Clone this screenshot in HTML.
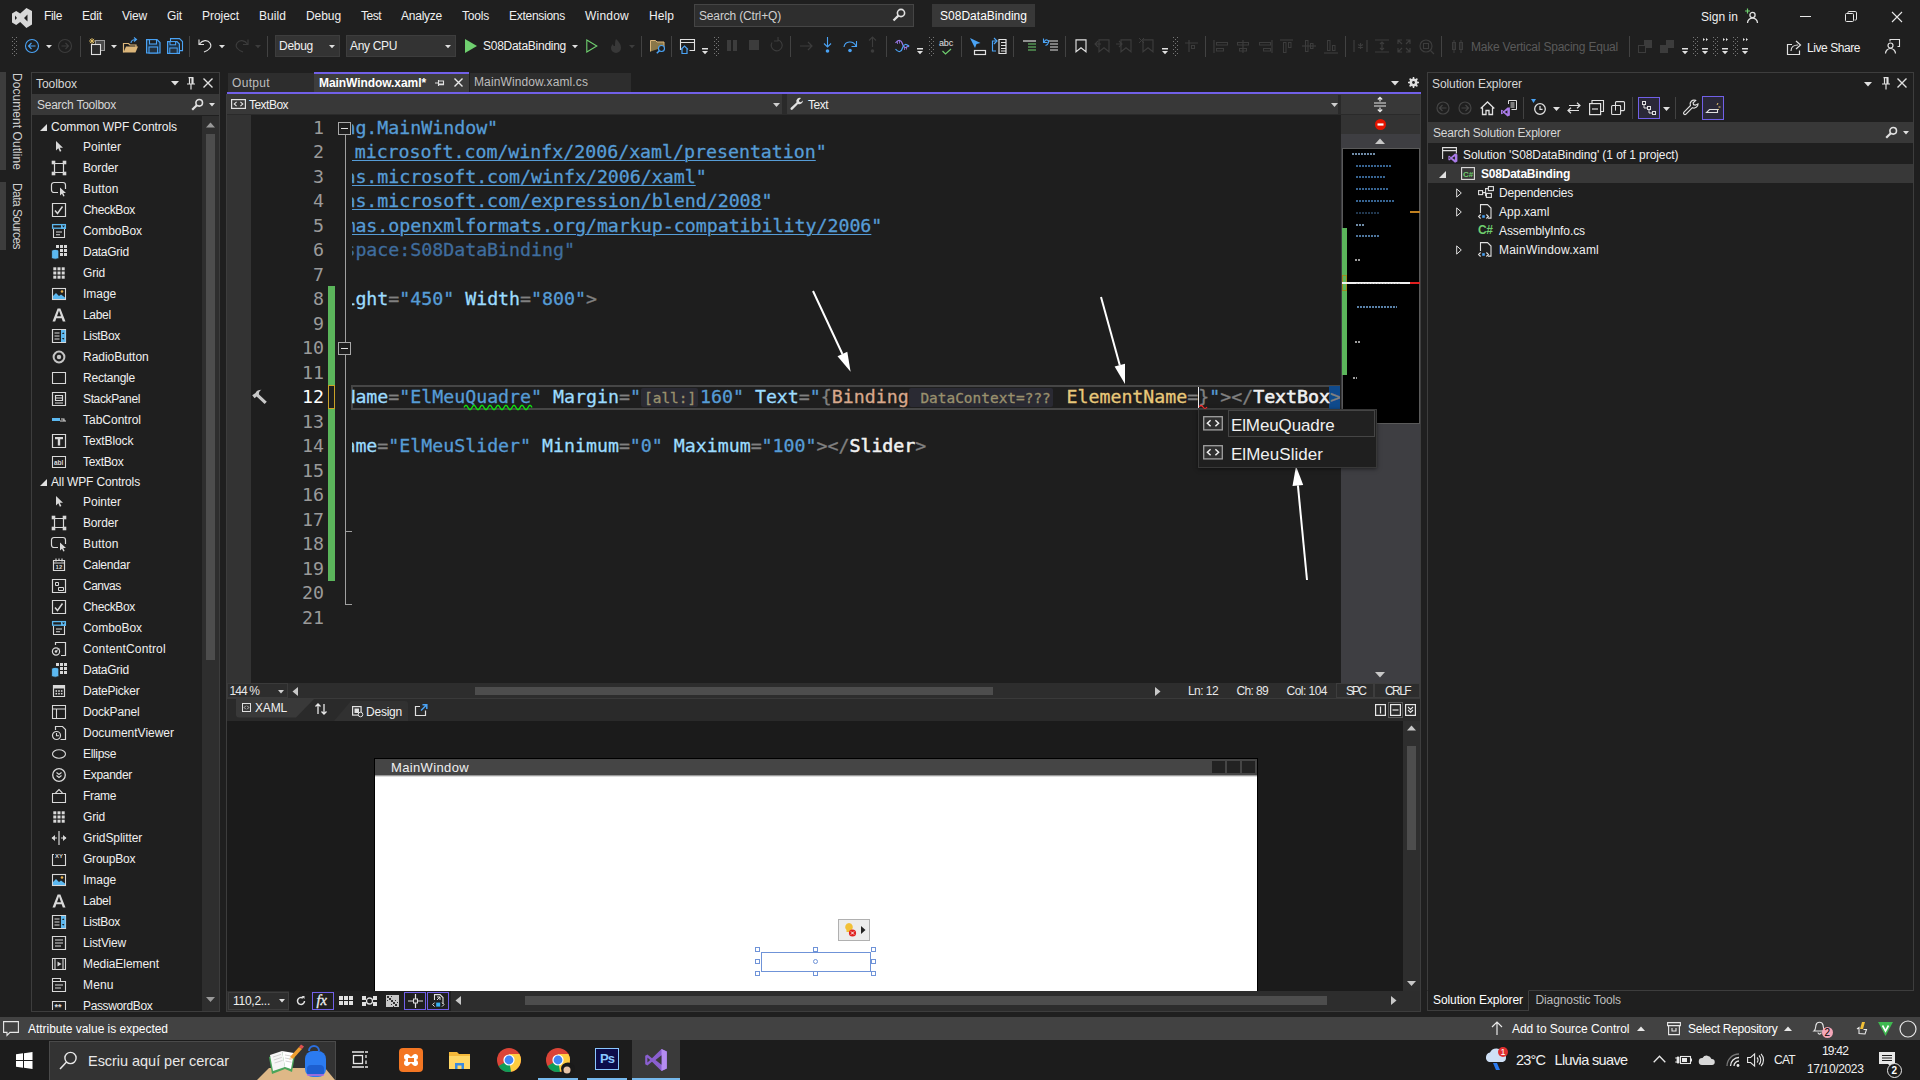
<!DOCTYPE html>
<html><head><meta charset="utf-8"><title>S08DataBinding - Microsoft Visual Studio</title>
<style>
*{box-sizing:border-box;margin:0;padding:0}
html,body{width:1920px;height:1080px;overflow:hidden;background:#1f1f1f}
body{position:relative;font-family:"Liberation Sans",sans-serif;font-size:12px;color:#f1f1f1;-webkit-font-smoothing:antialiased}
.a{position:absolute}
.t{position:absolute;white-space:nowrap;line-height:16px;height:16px}
.dim{color:#6a6a6a}
svg{position:absolute;overflow:visible}
.mono{font-family:"DejaVu Sans Mono","Liberation Mono",monospace;-webkit-text-stroke:0.3px currentColor}
</style></head><body>
<svg style="left:11px;top:6px;" width="22" height="22" viewBox="0 0 22 22"><path d="M15.4 1.9 L21 5 V18.5 L15.4 22 L9.2 16 L5.2 19 L1 16.5 V7.5 L5.2 5 L9.2 7.6 Z M4 9.6 L6 12 L4 14 Z M16.5 8.5 L13 12 L16.5 15.5 Z" fill="#d8d8d8" fill-rule="evenodd"/></svg>
<div class="t" style="left:44px;top:8.0px;color:#f0f0f0;letter-spacing:-0.334px;">File</div>
<div class="t" style="left:82px;top:8.0px;color:#f0f0f0;letter-spacing:-0.169px;">Edit</div>
<div class="t" style="left:122px;top:8.0px;color:#f0f0f0;letter-spacing:-0.198px;">View</div>
<div class="t" style="left:167px;top:8.0px;color:#f0f0f0;letter-spacing:-0.111px;">Git</div>
<div class="t" style="left:202px;top:8.0px;color:#f0f0f0;letter-spacing:-0.050px;">Project</div>
<div class="t" style="left:259px;top:8.0px;color:#f0f0f0;letter-spacing:0.063px;">Build</div>
<div class="t" style="left:306px;top:8.0px;color:#f0f0f0;letter-spacing:-0.072px;">Debug</div>
<div class="t" style="left:361px;top:8.0px;color:#f0f0f0;letter-spacing:-0.502px;">Test</div>
<div class="t" style="left:401px;top:8.0px;color:#f0f0f0;letter-spacing:-0.242px;">Analyze</div>
<div class="t" style="left:462px;top:8.0px;color:#f0f0f0;letter-spacing:-0.203px;">Tools</div>
<div class="t" style="left:509px;top:8.0px;color:#f0f0f0;letter-spacing:-0.270px;">Extensions</div>
<div class="t" style="left:585px;top:8.0px;color:#f0f0f0;letter-spacing:0.220px;">Window</div>
<div class="t" style="left:649px;top:8.0px;color:#f0f0f0;letter-spacing:0.080px;">Help</div>
<div class="a" style="left:694px;top:4px;width:220px;height:23px;background:#2e2e2e;border:1px solid #454545;"></div>
<div class="t" style="left:699px;top:8.0px;color:#d0d0d0;letter-spacing:-0.157px;">Search (Ctrl+Q)</div>
<svg style="left:892px;top:8px;" width="14" height="14" viewBox="0 0 14 14"><circle cx="9" cy="5" r="3.6" fill="none" stroke="#e0e0e0" stroke-width="1.6"/><path d="M6.4 7.6 L1.5 12.5" stroke="#e0e0e0" stroke-width="2.2"/></svg>
<div class="a" style="left:932px;top:4px;width:103px;height:23px;background:#383838;"></div>
<div class="t" style="left:940px;top:8.0px;color:#ffffff;letter-spacing:0.019px;">S08DataBinding</div>
<div class="t" style="left:1701px;top:9.0px;color:#f0f0f0;letter-spacing:0.044px;">Sign in</div>
<svg style="left:1744px;top:8px;" width="16" height="16" viewBox="0 0 16 16"><circle cx="8.5" cy="7" r="2.6" fill="none" stroke="#e0e0e0" stroke-width="1.3"/><path d="M3.5 15 a5 5 0 0 1 10 0" fill="none" stroke="#e0e0e0" stroke-width="1.3"/><path d="M3.5 0.5 v5 M1 3 h5" stroke="#6fcf6f" stroke-width="1.2"/></svg>
<div class="a" style="left:1800px;top:16px;width:11px;height:1px;background:#e8e8e8;"></div>
<svg style="left:1845px;top:11px;" width="12" height="12" viewBox="0 0 12 12"><rect x="0.5" y="2.5" width="8" height="8" rx="1" fill="none" stroke="#e8e8e8"/><path d="M3 2.5 v-1.2 a0.8 0.8 0 0 1 .8 -.8 h6.4 a1.3 1.3 0 0 1 1.3 1.3 v6.4 a.8 .8 0 0 1 -.8 .8 h-1.2" fill="none" stroke="#e8e8e8"/></svg>
<svg style="left:1892px;top:12px;" width="10" height="10" viewBox="0 0 10 10"><path d="M0 0 L10 10 M10 0 L0 10" stroke="#e8e8e8" stroke-width="1.1"/></svg>
<svg style="left:12px;top:37px;" width="5" height="19" viewBox="0 0 5 19"><rect x="0" y="0" width="1" height="1" fill="#777"/><rect x="2" y="2" width="1" height="1" fill="#777"/><rect x="4" y="0" width="1" height="1" fill="#777"/><rect x="0" y="4" width="1" height="1" fill="#777"/><rect x="2" y="6" width="1" height="1" fill="#777"/><rect x="4" y="4" width="1" height="1" fill="#777"/><rect x="0" y="8" width="1" height="1" fill="#777"/><rect x="2" y="10" width="1" height="1" fill="#777"/><rect x="4" y="8" width="1" height="1" fill="#777"/><rect x="0" y="12" width="1" height="1" fill="#777"/><rect x="2" y="14" width="1" height="1" fill="#777"/><rect x="4" y="12" width="1" height="1" fill="#777"/><rect x="0" y="16" width="1" height="1" fill="#777"/><rect x="2" y="18" width="1" height="1" fill="#777"/><rect x="4" y="16" width="1" height="1" fill="#777"/></svg>
<svg style="left:24px;top:38px;" width="16" height="16" viewBox="0 0 16 16"><circle cx="8" cy="8" r="6.5" fill="none" stroke="#4aa3f5" stroke-width="1.1"/><path d="M11.5 8 h-7 M7.5 5 l-3 3 3 3" fill="none" stroke="#4aa3f5" stroke-width="1.1"/></svg>
<svg style="left:46px;top:45px;" width="6" height="3" viewBox="0 0 6 3"><path d="M0 0 h6 l-3 3.2z" fill="#e0e0e0"/></svg>
<svg style="left:57px;top:38px;" width="16" height="16" viewBox="0 0 16 16"><circle cx="8" cy="8" r="6.5" fill="none" stroke="#3c3c3c" stroke-width="1.1"/><path d="M4.5 8 h7 M8.5 5 l3 3 -3 3" fill="none" stroke="#3c3c3c" stroke-width="1.1"/></svg>
<div class="a" style="left:80px;top:36px;width:1px;height:21px;background:#424242;"></div>
<svg style="left:89px;top:38px;" width="17" height="17" viewBox="0 0 17 17"><rect x="6.5" y="2.5" width="9" height="10" fill="#4a4a4a" stroke="#9a9a9a" stroke-width="1"/><rect x="2.5" y="6.5" width="9" height="10" fill="#2a2a2a" stroke="#e0e0e0" stroke-width="1.1"/><path d="M3 0 v6 M0 3 h6 M0.9 0.9 l4.2 4.2 M5.1 0.9 l-4.2 4.2" stroke="#e8c46a" stroke-width="0.9"/></svg>
<svg style="left:111px;top:45px;" width="6" height="3" viewBox="0 0 6 3"><path d="M0 0 h6 l-3 3.2z" fill="#e0e0e0"/></svg>
<svg style="left:123px;top:38px;" width="17" height="16" viewBox="0 0 17 16"><path d="M0.5 14.5 v-9 h5 l1.5 1.5 h6 v2" fill="none" stroke="#dcb67a" stroke-width="1.2"/><path d="M0.5 14.5 l2.5 -6 h12 l-2.5 6z" fill="#dcb67a"/><path d="M8 5 c0 -3 3 -3.5 5 -3.5 M11 -0.5 l2.5 2 -2.5 2" fill="none" stroke="#4aa3f5" stroke-width="1.1"/></svg>
<svg style="left:146px;top:39px;" width="15" height="15" viewBox="0 0 15 15"><path d="M0.6 0.6 h10.4 l3 3 v10.4 h-13.4z" fill="#1d3246" stroke="#4aa3f5" stroke-width="1.2"/><rect x="3.5" y="0.6" width="7" height="4.4" fill="#1f1f1f" stroke="#4aa3f5" stroke-width="1.1"/><rect x="3" y="8" width="8.6" height="6" fill="#24303c" stroke="#4aa3f5" stroke-width="1.1"/></svg>
<svg style="left:167px;top:38px;" width="16" height="16" viewBox="0 0 16 16"><path d="M3.5 3 v-2.4 h9 l3 3 v9 h-3" fill="none" stroke="#4aa3f5" stroke-width="1.1"/><path d="M0.6 3.6 h9.4 l2.4 2.4 v9.4 h-11.8z" fill="#1d3246" stroke="#4aa3f5" stroke-width="1.2"/><rect x="3" y="3.6" width="5.6" height="3.2" fill="#1f1f1f" stroke="#4aa3f5" stroke-width="1"/><rect x="2.8" y="10" width="7.4" height="5.4" fill="#24303c" stroke="#4aa3f5" stroke-width="1"/></svg>
<div class="a" style="left:189px;top:36px;width:1px;height:21px;background:#424242;"></div>
<svg style="left:198px;top:38px;" width="15" height="15" viewBox="0 0 15 15"><path d="M1 1.5 v5 h5" fill="none" stroke="#e0e0e0" stroke-width="1.15"/><path d="M1.5 6 c3 -4 8 -4.5 10.5 -1 c2.5 4 -1 7 -6 9" fill="none" stroke="#e0e0e0" stroke-width="1.15"/></svg>
<svg style="left:219px;top:45px;" width="6" height="3" viewBox="0 0 6 3"><path d="M0 0 h6 l-3 3.2z" fill="#e0e0e0"/></svg>
<svg style="left:234px;top:38px;" width="15" height="15" viewBox="0 0 15 15"><path d="M14 1.5 v5 h-5" fill="none" stroke="#3c3c3c" stroke-width="1.15"/><path d="M13.5 6 c-3 -4 -8 -4.5 -10.5 -1 c-2.5 4 1 7 6 9" fill="none" stroke="#3c3c3c" stroke-width="1.15"/></svg>
<svg style="left:255px;top:45px;" width="6" height="3" viewBox="0 0 6 3"><path d="M0 0 h6 l-3 3.2z" fill="#3c3c3c"/></svg>
<div class="a" style="left:267px;top:36px;width:1px;height:21px;background:#424242;"></div>
<div class="a" style="left:275px;top:35px;width:65px;height:22px;background:#333333;border:1px solid #3d3d3d;"></div>
<div class="t" style="left:279px;top:38.0px;color:#f0f0f0;letter-spacing:-0.272px;">Debug</div>
<svg style="left:329px;top:45px;" width="6" height="3" viewBox="0 0 6 3"><path d="M0 0 h6 l-3 3.2z" fill="#e0e0e0"/></svg>
<div class="a" style="left:346px;top:35px;width:110px;height:22px;background:#333333;border:1px solid #3d3d3d;"></div>
<div class="t" style="left:350px;top:38.0px;color:#f0f0f0;letter-spacing:-0.335px;">Any CPU</div>
<svg style="left:445px;top:45px;" width="6" height="3" viewBox="0 0 6 3"><path d="M0 0 h6 l-3 3.2z" fill="#e0e0e0"/></svg>
<svg style="left:465px;top:39px;" width="12" height="14" viewBox="0 0 12 14"><path d="M0 0 l12 7 -12 7z" fill="#6fcf6f"/></svg>
<div class="t" style="left:483px;top:38.0px;color:#f0f0f0;letter-spacing:-0.266px;">S08DataBinding</div>
<svg style="left:572px;top:45px;" width="6" height="3" viewBox="0 0 6 3"><path d="M0 0 h6 l-3 3.2z" fill="#e0e0e0"/></svg>
<svg style="left:586px;top:39px;" width="12" height="14" viewBox="0 0 12 14"><path d="M0.8 1 l10 6 -10 6z" fill="none" stroke="#6fcf6f" stroke-width="1.1"/></svg>
<svg style="left:609px;top:38px;" width="14" height="16" viewBox="0 0 14 16"><path d="M7 1 c3 3 5 5 5 9 a5 5 0 0 1 -10 0 c0 -2 1 -3 2 -4 c0 2 1 2 2 2 c0 -3 0 -5 1 -7z" fill="#383838"/></svg>
<svg style="left:629px;top:45px;" width="6" height="3" viewBox="0 0 6 3"><path d="M0 0 h6 l-3 3.2z" fill="#3c3c3c"/></svg>
<div class="a" style="left:641px;top:36px;width:1px;height:21px;background:#424242;"></div>
<svg style="left:650px;top:38px;" width="16" height="16" viewBox="0 0 16 16"><path d="M0.5 13.5 v-11 h5 l1.5 1.5 h7 v5" fill="#8a7748" stroke="#dcb67a" stroke-width="1"/><circle cx="11.5" cy="10.5" r="3" fill="#1f1f1f" stroke="#4aa3f5" stroke-width="1.15"/><path d="M9.3 12.7 l-2.5 2.5" stroke="#4aa3f5" stroke-width="1.6"/></svg>
<div class="a" style="left:671px;top:36px;width:1px;height:21px;background:#424242;"></div>
<svg style="left:680px;top:38px;" width="15" height="16" viewBox="0 0 15 16"><path d="M0.5 12 v-10.5 h14 v11 h-5" fill="none" stroke="#e0e0e0" stroke-width="1.1"/><path d="M0.5 4.5 h14" stroke="#e0e0e0"/><path d="M1 11.5 l3.5 -3.5 3.5 3.5 M2 11 v4.5 h5 v-4.5" fill="none" stroke="#4aa3f5" stroke-width="1.2"/></svg>
<svg style="left:702px;top:48px;" width="6" height="7" viewBox="0 0 6 7"><path d="M0 0 h6 v1.4 h-6z M0 3 h6 l-3 3.2z" fill="#e0e0e0"/></svg>
<svg style="left:714px;top:37px;" width="5" height="19" viewBox="0 0 5 19"><rect x="0" y="0" width="1" height="1" fill="#777"/><rect x="2" y="2" width="1" height="1" fill="#777"/><rect x="4" y="0" width="1" height="1" fill="#777"/><rect x="0" y="4" width="1" height="1" fill="#777"/><rect x="2" y="6" width="1" height="1" fill="#777"/><rect x="4" y="4" width="1" height="1" fill="#777"/><rect x="0" y="8" width="1" height="1" fill="#777"/><rect x="2" y="10" width="1" height="1" fill="#777"/><rect x="4" y="8" width="1" height="1" fill="#777"/><rect x="0" y="12" width="1" height="1" fill="#777"/><rect x="2" y="14" width="1" height="1" fill="#777"/><rect x="4" y="12" width="1" height="1" fill="#777"/><rect x="0" y="16" width="1" height="1" fill="#777"/><rect x="2" y="18" width="1" height="1" fill="#777"/><rect x="4" y="16" width="1" height="1" fill="#777"/></svg>
<div class="a" style="left:727px;top:40px;width:4px;height:11px;background:#3c3c3c;"></div>
<div class="a" style="left:733px;top:40px;width:4px;height:11px;background:#3c3c3c;"></div>
<div class="a" style="left:749px;top:40px;width:10px;height:10px;background:#3c3c3c;"></div>
<svg style="left:769px;top:38px;" width="15" height="15" viewBox="0 0 15 15"><path d="M9 2 a5.5 5.5 0 1 1 -6 2.5" fill="none" stroke="#3c3c3c" stroke-width="1.1"/><path d="M9 -1 v4 h-4" fill="none" stroke="#3c3c3c" stroke-width="1.1"/></svg>
<div class="a" style="left:790px;top:36px;width:1px;height:21px;background:#424242;"></div>
<svg style="left:800px;top:40px;" width="13" height="12" viewBox="0 0 13 12"><path d="M0 6 h12 M8 2 l4 4 -4 4" fill="none" stroke="#3c3c3c" stroke-width="1.2"/></svg>
<svg style="left:822px;top:36px;" width="11" height="18" viewBox="0 0 11 18"><path d="M5.5 1 v10 M2 7.5 l3.5 3.5 3.5 -3.5" fill="none" stroke="#4aa3f5" stroke-width="1.1"/><circle cx="5.5" cy="15" r="1.8" fill="#4aa3f5"/></svg>
<svg style="left:843px;top:38px;" width="14" height="15" viewBox="0 0 14 15"><path d="M1 9 c1 -6 9 -7 12 -1" fill="none" stroke="#4aa3f5" stroke-width="1.15"/><path d="M13.5 3 v5.5 h-5" fill="none" stroke="#4aa3f5" stroke-width="1.1"/><circle cx="7" cy="12.5" r="1.8" fill="#4aa3f5"/></svg>
<svg style="left:867px;top:36px;" width="11" height="18" viewBox="0 0 11 18"><path d="M5.5 11 v-10 M2 4.5 l3.5 -3.5 3.5 3.5" fill="none" stroke="#3c3c3c" stroke-width="1.1"/><circle cx="5.5" cy="15" r="1.8" fill="#3c3c3c"/></svg>
<div class="a" style="left:886px;top:36px;width:1px;height:21px;background:#424242;"></div>
<svg style="left:895px;top:38px;" width="14" height="15" viewBox="0 0 14 15"><path d="M0.5 5 c3 -4 6 -3 7 1 c1 4 4 5 6.5 1" fill="none" stroke="#9a78e8" stroke-width="1.2"/><path d="M0.5 11 c3 4 6 3 7 -1 c1 -4 4 -5 6.5 -1" fill="none" stroke="#4aa3f5" stroke-width="1.2"/><path d="M2.5 3 v3 M4.5 2.5 v3 M9.5 9 v3 M11.5 8.5 v3" stroke="#9a78e8" stroke-width="0.8"/></svg>
<svg style="left:917px;top:48px;" width="6" height="7" viewBox="0 0 6 7"><path d="M0 0 h6 v1.4 h-6z M0 3 h6 l-3 3.2z" fill="#e0e0e0"/></svg>
<svg style="left:929px;top:37px;" width="5" height="19" viewBox="0 0 5 19"><rect x="0" y="0" width="1" height="1" fill="#777"/><rect x="2" y="2" width="1" height="1" fill="#777"/><rect x="4" y="0" width="1" height="1" fill="#777"/><rect x="0" y="4" width="1" height="1" fill="#777"/><rect x="2" y="6" width="1" height="1" fill="#777"/><rect x="4" y="4" width="1" height="1" fill="#777"/><rect x="0" y="8" width="1" height="1" fill="#777"/><rect x="2" y="10" width="1" height="1" fill="#777"/><rect x="4" y="8" width="1" height="1" fill="#777"/><rect x="0" y="12" width="1" height="1" fill="#777"/><rect x="2" y="14" width="1" height="1" fill="#777"/><rect x="4" y="12" width="1" height="1" fill="#777"/><rect x="0" y="16" width="1" height="1" fill="#777"/><rect x="2" y="18" width="1" height="1" fill="#777"/><rect x="4" y="16" width="1" height="1" fill="#777"/></svg>
<div class="t" style="left:939px;top:37.5px;font-size:9px;line-height:10px;height:10px;color:#e0e0e0;letter-spacing:-0.171px;">abc</div>
<svg style="left:942px;top:48.5px;" width="10" height="6" viewBox="0 0 10 6"><path d="M0.5 2 l3 3 5.5 -5" fill="none" stroke="#6fcf6f" stroke-width="1.15"/></svg>
<div class="a" style="left:961px;top:36px;width:1px;height:21px;background:#424242;"></div>
<svg style="left:969px;top:38px;" width="17" height="17" viewBox="0 0 17 17"><path d="M1 0 l5 10 1.5 -4 4 -1z" fill="#4aa3f5"/><rect x="5.5" y="12.5" width="11" height="4" fill="none" stroke="#e0e0e0" stroke-width="1.2"/></svg>
<svg style="left:991px;top:38px;" width="16" height="16" viewBox="0 0 16 16"><path d="M5 3 h-3.5 v10 h3.5" fill="none" stroke="#4aa3f5" stroke-width="1.15"/><path d="M3 0 l3 3 -3 3" fill="none" stroke="#4aa3f5" stroke-width="1.2"/><path d="M8 1.5 h7 v14 h-7z M10 4.5 h5 M10 7.5 h5 M10 10.5 h5 M10 13 h5" fill="none" stroke="#e0e0e0" stroke-width="1.2"/></svg>
<div class="a" style="left:1013px;top:36px;width:1px;height:21px;background:#424242;"></div>
<svg style="left:1022px;top:40px;" width="15" height="12" viewBox="0 0 15 12"><path d="M1 1 h13" stroke="#e0e0e0" stroke-width="1.2"/><path d="M6 4 h8 M6 7 h8 M6 10 h8" stroke="#6fcf6f" stroke-width="1.2"/></svg>
<svg style="left:1042px;top:38px;" width="17" height="14" viewBox="0 0 17 14"><path d="M6 3 h10 M8 6 h8 M8 9 h8 M8 12 h8" stroke="#e0e0e0" stroke-width="1.2"/><path d="M1.5 0.5 v4 h4 M2 4 c2 -3.5 5 -2 4.5 0.5 c-0.3 1.5 -1.5 2.5 -3 3" fill="none" stroke="#4aa3f5" stroke-width="1.1"/></svg>
<div class="a" style="left:1065px;top:36px;width:1px;height:21px;background:#424242;"></div>
<svg style="left:1075px;top:39px;" width="12" height="14" viewBox="0 0 12 14"><path d="M1 0.8 h10 v12 l-5 -4 -5 4z" fill="none" stroke="#e0e0e0" stroke-width="1.15"/></svg>
<svg style="left:1098px;top:39px;" width="12" height="14" viewBox="0 0 12 14"><path d="M1 0.8 h10 v12 l-5 -4 -5 4z" fill="none" stroke="#3c3c3c" stroke-width="1.15"/><path d="M-3 5 h6 M0 2 l-3 3 3 3" fill="none" stroke="#3c3c3c" stroke-width="1.1"/></svg>
<svg style="left:1120px;top:39px;" width="12" height="14" viewBox="0 0 12 14"><path d="M1 0.8 h10 v12 l-5 -4 -5 4z" fill="none" stroke="#3c3c3c" stroke-width="1.15"/><path d="M-4 5 h6 M-1 2 l3 3 -3 3" fill="none" stroke="#3c3c3c" stroke-width="1.1"/></svg>
<svg style="left:1142px;top:39px;" width="12" height="14" viewBox="0 0 12 14"><path d="M1 0.8 h10 v12 l-5 -4 -5 4z" fill="none" stroke="#3c3c3c" stroke-width="1.15"/><path d="M-3 -1 l5 5 M2 -1 l-5 5" fill="none" stroke="#3c3c3c" stroke-width="1"/></svg>
<svg style="left:1162px;top:48px;" width="6" height="7" viewBox="0 0 6 7"><path d="M0 0 h6 v1.4 h-6z M0 3 h6 l-3 3.2z" fill="#e0e0e0"/></svg>
<svg style="left:1173px;top:37px;" width="5" height="19" viewBox="0 0 5 19"><rect x="0" y="0" width="1" height="1" fill="#777"/><rect x="2" y="2" width="1" height="1" fill="#777"/><rect x="4" y="0" width="1" height="1" fill="#777"/><rect x="0" y="4" width="1" height="1" fill="#777"/><rect x="2" y="6" width="1" height="1" fill="#777"/><rect x="4" y="4" width="1" height="1" fill="#777"/><rect x="0" y="8" width="1" height="1" fill="#777"/><rect x="2" y="10" width="1" height="1" fill="#777"/><rect x="4" y="8" width="1" height="1" fill="#777"/><rect x="0" y="12" width="1" height="1" fill="#777"/><rect x="2" y="14" width="1" height="1" fill="#777"/><rect x="4" y="12" width="1" height="1" fill="#777"/><rect x="0" y="16" width="1" height="1" fill="#777"/><rect x="2" y="18" width="1" height="1" fill="#777"/><rect x="4" y="16" width="1" height="1" fill="#777"/></svg>
<svg style="left:1185px;top:40px;" width="13" height="12" viewBox="0 0 13 12"><path d="M0 3 h13 M4 0 v12" stroke="#3c3c3c" stroke-width="1.2"/><rect x="6.5" y="5.5" width="3" height="3" fill="none" stroke="#3c3c3c"/></svg>
<div class="a" style="left:1205px;top:36px;width:1px;height:21px;background:#424242;"></div>
<svg style="left:1213px;top:40px;" width="16" height="13" viewBox="0 0 16 13"><path d="M1 0 v13" stroke="#3c3c3c" stroke-width="1.2"/><rect x="3.5" y="2.5" width="11" height="2.5" fill="none" stroke="#3c3c3c"/><rect x="3.5" y="8.5" width="7" height="2.5" fill="none" stroke="#3c3c3c"/></svg>
<svg style="left:1236px;top:40px;" width="14" height="13" viewBox="0 0 14 13"><path d="M7 0 v13" stroke="#3c3c3c" stroke-width="1.2"/><rect x="1.5" y="2.5" width="11" height="2.5" fill="none" stroke="#3c3c3c"/><rect x="3.5" y="8.5" width="7" height="2.5" fill="none" stroke="#3c3c3c"/></svg>
<svg style="left:1258px;top:40px;" width="16" height="13" viewBox="0 0 16 13"><path d="M14 0 v13" stroke="#3c3c3c" stroke-width="1.2"/><rect x="1.5" y="2.5" width="11" height="2.5" fill="none" stroke="#3c3c3c"/><rect x="5.5" y="8.5" width="7" height="2.5" fill="none" stroke="#3c3c3c"/></svg>
<svg style="left:1280px;top:39px;" width="14" height="15" viewBox="0 0 14 15"><path d="M0 1 h13" stroke="#3c3c3c" stroke-width="1.2"/><rect x="3.5" y="3.5" width="2.5" height="10" fill="none" stroke="#3c3c3c"/><rect x="8.5" y="3.5" width="2.5" height="5" fill="none" stroke="#3c3c3c"/></svg>
<svg style="left:1302px;top:39px;" width="14" height="15" viewBox="0 0 14 15"><path d="M0 7 h14" stroke="#3c3c3c" stroke-width="1.2"/><rect x="3.5" y="1.5" width="2.5" height="11" fill="none" stroke="#3c3c3c"/><rect x="8.5" y="4.5" width="2.5" height="5" fill="none" stroke="#3c3c3c"/></svg>
<svg style="left:1324px;top:39px;" width="14" height="15" viewBox="0 0 14 15"><path d="M0 14 h14" stroke="#3c3c3c" stroke-width="1.2"/><rect x="3.5" y="1.5" width="2.5" height="10" fill="none" stroke="#3c3c3c"/><rect x="8.5" y="6.5" width="2.5" height="5" fill="none" stroke="#3c3c3c"/></svg>
<div class="a" style="left:1345px;top:36px;width:1px;height:21px;background:#424242;"></div>
<svg style="left:1353px;top:40px;" width="15" height="12" viewBox="0 0 15 12"><path d="M1 0 v12 M14 0 v12 M7.5 3 v6 M5 4.5 l5 3 M10 4.5 l-5 3" stroke="#3c3c3c" stroke-width="1.2"/></svg>
<svg style="left:1375px;top:39px;" width="15" height="14" viewBox="0 0 15 14"><path d="M0 1 h14 M0 13 h14 M7 3 v8 M5 5 l2 -2 2 2 M5 9 l2 2 2 -2" fill="none" stroke="#3c3c3c" stroke-width="1.2"/></svg>
<svg style="left:1397px;top:39px;" width="14" height="14" viewBox="0 0 14 14"><path d="M1 5 v-4 h4 M9 1 h4 v4 M13 9 v4 h-4 M5 13 h-4 v-4 M1 1 l4 4 M13 1 l-4 4 M13 13 l-4 -4 M1 13 l4 -4" fill="none" stroke="#3c3c3c" stroke-width="1.2"/></svg>
<svg style="left:1419px;top:39px;" width="16" height="16" viewBox="0 0 16 16"><circle cx="7" cy="7" r="6" fill="none" stroke="#3c3c3c" stroke-width="1.2"/><rect x="4.5" y="4.5" width="5" height="5" fill="none" stroke="#3c3c3c"/><path d="M11.5 11.5 l3.5 3.5" stroke="#3c3c3c" stroke-width="1.15"/></svg>
<div class="a" style="left:1441px;top:36px;width:1px;height:21px;background:#424242;"></div>
<svg style="left:1451px;top:40px;" width="14" height="13" viewBox="0 0 14 13"><rect x="1.5" y="2.5" width="3" height="7" fill="none" stroke="#3c3c3c"/><rect x="8.5" y="2.5" width="3" height="7" fill="none" stroke="#3c3c3c"/><path d="M3 0 v13 M10 0 v13" stroke="#3c3c3c"/></svg>
<div class="t" style="left:1471px;top:39.0px;color:#5a5a5a;letter-spacing:-0.213px;">Make Vertical Spacing Equal</div>
<div class="a" style="left:1629px;top:36px;width:1px;height:21px;background:#424242;"></div>
<svg style="left:1638px;top:39px;" width="15" height="15" viewBox="0 0 15 15"><rect x="6" y="1" width="8" height="8" fill="#3c3c3c"/><rect x="0.5" y="6.5" width="7" height="7" fill="#1f1f1f" stroke="#3c3c3c"/></svg>
<svg style="left:1660px;top:39px;" width="15" height="15" viewBox="0 0 15 15"><rect x="6" y="1" width="8" height="8" fill="#3c3c3c"/><rect x="0" y="6" width="8" height="8" fill="#3c3c3c"/></svg>
<svg style="left:1682px;top:48px;" width="6" height="7" viewBox="0 0 6 7"><path d="M0 0 h6 v1.4 h-6z M0 3 h6 l-3 3.2z" fill="#e0e0e0"/></svg>
<svg style="left:1693px;top:37px;" width="5" height="19" viewBox="0 0 5 19"><rect x="0" y="0" width="1" height="1" fill="#777"/><rect x="2" y="2" width="1" height="1" fill="#777"/><rect x="4" y="0" width="1" height="1" fill="#777"/><rect x="0" y="4" width="1" height="1" fill="#777"/><rect x="2" y="6" width="1" height="1" fill="#777"/><rect x="4" y="4" width="1" height="1" fill="#777"/><rect x="0" y="8" width="1" height="1" fill="#777"/><rect x="2" y="10" width="1" height="1" fill="#777"/><rect x="4" y="8" width="1" height="1" fill="#777"/><rect x="0" y="12" width="1" height="1" fill="#777"/><rect x="2" y="14" width="1" height="1" fill="#777"/><rect x="4" y="12" width="1" height="1" fill="#777"/><rect x="0" y="16" width="1" height="1" fill="#777"/><rect x="2" y="18" width="1" height="1" fill="#777"/><rect x="4" y="16" width="1" height="1" fill="#777"/></svg>
<svg style="left:1702px;top:48px;" width="6" height="7" viewBox="0 0 6 7"><path d="M0 0 h6 v1.4 h-6z M0 3 h6 l-3 3.2z" fill="#e0e0e0"/><path d="M1 -10 l2 1.5 -2 1.5z M4 -10 l2 1.5 -2 1.5z" fill="#e0e0e0"/></svg>
<svg style="left:1713px;top:37px;" width="5" height="19" viewBox="0 0 5 19"><rect x="0" y="0" width="1" height="1" fill="#777"/><rect x="2" y="2" width="1" height="1" fill="#777"/><rect x="4" y="0" width="1" height="1" fill="#777"/><rect x="0" y="4" width="1" height="1" fill="#777"/><rect x="2" y="6" width="1" height="1" fill="#777"/><rect x="4" y="4" width="1" height="1" fill="#777"/><rect x="0" y="8" width="1" height="1" fill="#777"/><rect x="2" y="10" width="1" height="1" fill="#777"/><rect x="4" y="8" width="1" height="1" fill="#777"/><rect x="0" y="12" width="1" height="1" fill="#777"/><rect x="2" y="14" width="1" height="1" fill="#777"/><rect x="4" y="12" width="1" height="1" fill="#777"/><rect x="0" y="16" width="1" height="1" fill="#777"/><rect x="2" y="18" width="1" height="1" fill="#777"/><rect x="4" y="16" width="1" height="1" fill="#777"/></svg>
<svg style="left:1722px;top:48px;" width="6" height="7" viewBox="0 0 6 7"><path d="M0 0 h6 v1.4 h-6z M0 3 h6 l-3 3.2z" fill="#e0e0e0"/><path d="M1 -10 l2 1.5 -2 1.5z M4 -10 l2 1.5 -2 1.5z" fill="#e0e0e0"/></svg>
<svg style="left:1733px;top:37px;" width="5" height="19" viewBox="0 0 5 19"><rect x="0" y="0" width="1" height="1" fill="#777"/><rect x="2" y="2" width="1" height="1" fill="#777"/><rect x="4" y="0" width="1" height="1" fill="#777"/><rect x="0" y="4" width="1" height="1" fill="#777"/><rect x="2" y="6" width="1" height="1" fill="#777"/><rect x="4" y="4" width="1" height="1" fill="#777"/><rect x="0" y="8" width="1" height="1" fill="#777"/><rect x="2" y="10" width="1" height="1" fill="#777"/><rect x="4" y="8" width="1" height="1" fill="#777"/><rect x="0" y="12" width="1" height="1" fill="#777"/><rect x="2" y="14" width="1" height="1" fill="#777"/><rect x="4" y="12" width="1" height="1" fill="#777"/><rect x="0" y="16" width="1" height="1" fill="#777"/><rect x="2" y="18" width="1" height="1" fill="#777"/><rect x="4" y="16" width="1" height="1" fill="#777"/></svg>
<svg style="left:1742px;top:48px;" width="6" height="7" viewBox="0 0 6 7"><path d="M0 0 h6 v1.4 h-6z M0 3 h6 l-3 3.2z" fill="#e0e0e0"/><path d="M1 -10 l2 1.5 -2 1.5z M4 -10 l2 1.5 -2 1.5z" fill="#e0e0e0"/></svg>
<svg style="left:1787px;top:40px;" width="16" height="15" viewBox="0 0 16 15"><path d="M5 4.5 h-4.5 v10 h12 v-4" fill="none" stroke="#e0e0e0" stroke-width="1.2"/><path d="M4 11 c0 -4 3 -6 7 -6 M9 1 l4.5 4 -4.5 4" fill="none" stroke="#e0e0e0" stroke-width="1.2"/></svg>
<div class="t" style="left:1807px;top:40.0px;color:#f0f0f0;letter-spacing:-0.437px;">Live Share</div>
<svg style="left:1884px;top:39px;" width="16" height="15" viewBox="0 0 16 15"><path d="M6 2.5 v-2 h9.5 v7 h-2" fill="none" stroke="#e0e0e0" stroke-width="1.1"/><circle cx="6.5" cy="6.5" r="2.5" fill="none" stroke="#e0e0e0" stroke-width="1.2"/><path d="M1.5 14.5 a5 5 0 0 1 10 0" fill="none" stroke="#e0e0e0" stroke-width="1.2"/></svg>
<div class="a" style="left:0px;top:72px;width:6px;height:98px;background:#3d3d3d;"></div>
<div class="a" style="left:0px;top:182px;width:6px;height:68px;background:#3d3d3d;"></div>
<div class="t" style="left:25px;top:72.5px;transform-origin:0 0;transform:rotate(90deg);letter-spacing:0.060px;color:#d0d0d0">Document Outline</div>
<div class="t" style="left:25px;top:183px;transform-origin:0 0;transform:rotate(90deg);letter-spacing:-0.559px;color:#d0d0d0">Data Sources</div>
<div class="a" style="left:31px;top:72px;width:189px;height:940px;background:#1f1f1f;border:1px solid #3d3d3d;"></div>
<div class="t" style="left:36px;top:75.5px;color:#d6d6d6;letter-spacing:-0.052px;">Toolbox</div>
<svg style="left:171px;top:81px;" width="8" height="5" viewBox="0 0 8 5"><path d="M0 0 h8 l-4 4.5z" fill="#e0e0e0"/></svg>
<svg style="left:186px;top:77px;" width="10" height="13" viewBox="0 0 10 13"><path d="M2.5 0.7 h5 M3.5 0.7 v6 M7 0.7 v6 M6 0.7 v6 M1 7 h8 M5 7 v5.5" fill="none" stroke="#e0e0e0" stroke-width="1.2"/></svg>
<svg style="left:203px;top:78px;" width="10" height="10" viewBox="0 0 10 10"><path d="M0.5 0.5 L9.5 9.5 M9.5 0.5 L0.5 9.5" stroke="#e0e0e0" stroke-width="1.4"/></svg>
<div class="a" style="left:32px;top:94px;width:187px;height:21px;background:#383838;"></div>
<div class="t" style="left:37px;top:96.5px;color:#d6d6d6;letter-spacing:-0.250px;">Search Toolbox</div>
<svg style="left:191px;top:98px;" width="13" height="13" viewBox="0 0 13 13"><circle cx="8.2" cy="4.8" r="3.3" fill="none" stroke="#e0e0e0" stroke-width="1.6"/><path d="M5.8 7.2 L1.2 11.8" stroke="#e0e0e0" stroke-width="2.2"/></svg>
<svg style="left:209px;top:103px;" width="6" height="4" viewBox="0 0 6 4"><path d="M0 0 h6 l-3 3.5z" fill="#e0e0e0"/></svg>
<div class="a" style="left:202px;top:116px;width:17px;height:895px;background:#2e2e2e;"></div>
<div class="a" style="left:206px;top:134px;width:9px;height:526px;background:#4d4d4d;"></div>
<svg style="left:206px;top:122px;" width="9" height="6" viewBox="0 0 9 6"><path d="M0 5.5 l4.5 -5 4.5 5z" fill="#999"/></svg>
<svg style="left:206px;top:997px;" width="9" height="6" viewBox="0 0 9 6"><path d="M0 0 l4.5 5 4.5 -5z" fill="#999"/></svg>
<div class="a" style="left:0;top:115px;width:202px;height:895px;overflow:hidden"><svg style="left:40px;top:9px;" width="7" height="7" viewBox="0 0 7 7"><path d="M7 0 v7 h-7z" fill="#e0e0e0"/></svg>
<div class="t" style="left:51px;top:4.0px;color:#f0f0f0;letter-spacing:-0.036px;">Common WPF Controls</div>
<svg style="left:51px;top:23.5px;" width="16" height="16" viewBox="0 0 16 16"><path d="M5 2 v9.5 l2.3 -2.3 1.6 3.6 1.5 -0.7 -1.6 -3.4 h3.2z" fill="#d8d8d8"/></svg>
<div class="t" style="left:83px;top:23.5px;color:#f0f0f0;letter-spacing:-0.003px;">Pointer</div>
<svg style="left:51px;top:44.5px;" width="16" height="16" viewBox="0 0 16 16"><path d="M3.5 3.5 h9 v9 h-9z" fill="none" stroke="#d8d8d8" stroke-width="1.2"/><rect x="1" y="1" width="3" height="3" fill="#d8d8d8" stroke="#d8d8d8" stroke-width=".6"/><rect x="1" y="12" width="3" height="3" fill="#d8d8d8" stroke="#d8d8d8" stroke-width=".6"/><rect x="12" y="1" width="3" height="3" fill="#d8d8d8" stroke="#d8d8d8" stroke-width=".6"/><rect x="12" y="12" width="3" height="3" fill="#d8d8d8" stroke="#d8d8d8" stroke-width=".6"/></svg>
<div class="t" style="left:83px;top:44.5px;color:#f0f0f0;letter-spacing:-0.170px;">Border</div>
<svg style="left:51px;top:65.5px;" width="16" height="16" viewBox="0 0 16 16"><path d="M7 11.5 h-4 a2.5 2.5 0 0 1 -2.5 -2.5 v-5 a2.5 2.5 0 0 1 2.5 -2.5 h9 a2.5 2.5 0 0 1 2.5 2.5 v4" fill="none" stroke="#d8d8d8" stroke-width="1.2"/><path d="M9 6.5 v8 l2 -1.8 1.3 2.8 1.3 -0.6 -1.3 -2.8 h2.7z" fill="#d8d8d8"/></svg>
<div class="t" style="left:83px;top:65.5px;color:#f0f0f0;letter-spacing:0.168px;">Button</div>
<svg style="left:51px;top:86.5px;" width="16" height="16" viewBox="0 0 16 16"><path d="M1.5 1.5 h13 v13 h-13z" fill="none" stroke="#d8d8d8" stroke-width="1.2"/><path d="M4 8.5 l2.5 3 l5 -7" fill="none" stroke="#d8d8d8" stroke-width="1.5"/></svg>
<div class="t" style="left:83px;top:86.5px;color:#f0f0f0;letter-spacing:-0.336px;">CheckBox</div>
<svg style="left:51px;top:107.5px;" width="16" height="16" viewBox="0 0 16 16"><rect x="1.6" y="1.6" width="12.8" height="3.6" fill="#1f1f1f" stroke="#5cb8f0" stroke-width="1.3"/><rect x="10" y="1" width="5" height="4.8" fill="#5cb8f0"/><path d="M11 2.6 h3 l-1.5 1.8z" fill="#1f1f1f"/><path d="M2.5 6 v8.5 h11 v-8.5 M5 9 h6 M5 11.8 h4" fill="none" stroke="#d8d8d8" stroke-width="1.1"/></svg>
<div class="t" style="left:83px;top:107.5px;color:#f0f0f0;letter-spacing:-0.045px;">ComboBox</div>
<svg style="left:51px;top:128.5px;" width="16" height="16" viewBox="0 0 16 16"><rect x="5" y="1" width="3" height="3" fill="#d8d8d8"/><rect x="9" y="1" width="3" height="3" fill="#d8d8d8"/><rect x="9" y="5" width="3" height="3" fill="#d8d8d8"/><rect x="9" y="9" width="3" height="3" fill="#d8d8d8"/><rect x="13" y="1" width="3" height="3" fill="#d8d8d8"/><rect x="13" y="5" width="3" height="3" fill="#d8d8d8"/><rect x="13" y="9" width="3" height="3" fill="#d8d8d8"/><path d="M0.6 7 v6.6 a3.6 1.6 0 0 0 7.2 0 v-6.6 a3.6 1.6 0 0 0 -7.2 0" fill="#5cb8f0" stroke="#1f1f1f" stroke-width=".8"/></svg>
<div class="t" style="left:83px;top:128.5px;color:#f0f0f0;letter-spacing:-0.277px;">DataGrid</div>
<svg style="left:51px;top:149.5px;" width="16" height="16" viewBox="0 0 16 16"><rect x="2.3" y="2.3" width="3" height="3" fill="#d8d8d8"/><rect x="2.3" y="6.5" width="3" height="3" fill="#d8d8d8"/><rect x="2.3" y="10.7" width="3" height="3" fill="#d8d8d8"/><rect x="6.5" y="2.3" width="3" height="3" fill="#d8d8d8"/><rect x="6.5" y="6.5" width="3" height="3" fill="#d8d8d8"/><rect x="6.5" y="10.7" width="3" height="3" fill="#d8d8d8"/><rect x="10.7" y="2.3" width="3" height="3" fill="#d8d8d8"/><rect x="10.7" y="6.5" width="3" height="3" fill="#d8d8d8"/><rect x="10.7" y="10.7" width="3" height="3" fill="#d8d8d8"/></svg>
<div class="t" style="left:83px;top:149.5px;color:#f0f0f0;letter-spacing:-0.167px;">Grid</div>
<svg style="left:51px;top:170.5px;" width="16" height="16" viewBox="0 0 16 16"><rect x="1.5" y="2.5" width="13" height="11" fill="none" stroke="#d8d8d8" stroke-width="1.1"/><path d="M2 13 v-3 l3 -3 3 3 2 -1.5 4 3 v1.5z" fill="#5cb8f0"/><circle cx="11" cy="5.5" r="1.3" fill="#e8b04a"/></svg>
<div class="t" style="left:83px;top:170.5px;color:#f0f0f0;letter-spacing:-0.030px;">Image</div>
<svg style="left:51px;top:191.5px;" width="16" height="16" viewBox="0 0 16 16"><path d="M1.5 14.5 L6.6 1.5 h2.8 L14.5 14.5 h-2.7 l-1.1 -3.2 h-5.4 l-1.1 3.2z M6 9.2 h4 L8 3.6z" fill="#d8d8d8" fill-rule="evenodd"/></svg>
<div class="t" style="left:83px;top:191.5px;color:#f0f0f0;letter-spacing:-0.312px;">Label</div>
<svg style="left:51px;top:212.5px;" width="16" height="16" viewBox="0 0 16 16"><path d="M1.5 1.5 h13 v13 h-13z" fill="none" stroke="#d8d8d8" stroke-width="1.2"/><path d="M3.5 5 h5 M3.5 8 h5 M3.5 11 h5" fill="none" stroke="#d8d8d8" stroke-width="1.2"/><rect x="10" y="2" width="4.5" height="12" fill="#5cb8f0"/><path d="M11 6 l1.2 -1.8 1.2 1.8z M11 10 l1.2 1.8 1.2 -1.8z" fill="#1f1f1f"/></svg>
<div class="t" style="left:83px;top:212.5px;color:#f0f0f0;letter-spacing:-0.336px;">ListBox</div>
<svg style="left:51px;top:233.5px;" width="16" height="16" viewBox="0 0 16 16"><circle cx="8" cy="8" r="5.4" fill="none" stroke="#c4c4c4" stroke-width="2"/><circle cx="8" cy="8" r="2.2" fill="#c4c4c4"/></svg>
<div class="t" style="left:83px;top:233.5px;color:#f0f0f0;letter-spacing:-0.032px;">RadioButton</div>
<svg style="left:51px;top:254.5px;" width="16" height="16" viewBox="0 0 16 16"><path d="M1.5 2.5 h13 v11 h-13z" fill="none" stroke="#d8d8d8" stroke-width="1.1"/></svg>
<div class="t" style="left:83px;top:254.5px;color:#f0f0f0;letter-spacing:-0.226px;">Rectangle</div>
<svg style="left:51px;top:275.5px;" width="16" height="16" viewBox="0 0 16 16"><path d="M1.5 1.5 h13 v13 h-13z" fill="none" stroke="#d8d8d8" stroke-width="1.2"/><path d="M4.5 4.5 h7 v5 h-7z M4.5 7 h7 M4 12 h8" fill="none" stroke="#d8d8d8" stroke-width="1.2"/></svg>
<div class="t" style="left:83px;top:275.5px;color:#f0f0f0;letter-spacing:-0.370px;">StackPanel</div>
<svg style="left:51px;top:296.5px;" width="16" height="16" viewBox="0 0 16 16"><rect x="1" y="6" width="8" height="3" fill="#5cb8f0"/><path d="M9 9 h6 M10 7 h3 v2" fill="none" stroke="#d8d8d8" stroke-width="1.1"/></svg>
<div class="t" style="left:83px;top:296.5px;color:#f0f0f0;letter-spacing:-0.003px;">TabControl</div>
<svg style="left:51px;top:317.5px;" width="16" height="16" viewBox="0 0 16 16"><path d="M1.5 1.5 h13 v13 h-13z" fill="none" stroke="#d8d8d8" stroke-width="1.2"/><path d="M4 4 h8 v2.2 h-2.8 v6.3 h-2.4 v-6.3 h-2.8z" fill="#d8d8d8"/></svg>
<div class="t" style="left:83px;top:317.5px;color:#f0f0f0;letter-spacing:-0.117px;">TextBlock</div>
<svg style="left:51px;top:338.5px;" width="16" height="16" viewBox="0 0 16 16"><path d="M1.5 2.5 h13 v11 h-13z" fill="none" stroke="#d8d8d8" stroke-width="1.1"/><text x="3" y="10.6" font-family="Liberation Sans" font-size="6.5" font-weight="700" fill="#d8d8d8">abl</text></svg>
<div class="t" style="left:83px;top:338.5px;color:#f0f0f0;letter-spacing:-0.341px;">TextBox</div>
<svg style="left:40px;top:364px;" width="7" height="7" viewBox="0 0 7 7"><path d="M7 0 v7 h-7z" fill="#e0e0e0"/></svg>
<div class="t" style="left:51px;top:359.0px;color:#f0f0f0;letter-spacing:-0.147px;">All WPF Controls</div>
<svg style="left:51px;top:378.5px;" width="16" height="16" viewBox="0 0 16 16"><path d="M5 2 v9.5 l2.3 -2.3 1.6 3.6 1.5 -0.7 -1.6 -3.4 h3.2z" fill="#d8d8d8"/></svg>
<div class="t" style="left:83px;top:378.5px;color:#f0f0f0;letter-spacing:-0.003px;">Pointer</div>
<svg style="left:51px;top:399.5px;" width="16" height="16" viewBox="0 0 16 16"><path d="M3.5 3.5 h9 v9 h-9z" fill="none" stroke="#d8d8d8" stroke-width="1.2"/><rect x="1" y="1" width="3" height="3" fill="#d8d8d8" stroke="#d8d8d8" stroke-width=".6"/><rect x="1" y="12" width="3" height="3" fill="#d8d8d8" stroke="#d8d8d8" stroke-width=".6"/><rect x="12" y="1" width="3" height="3" fill="#d8d8d8" stroke="#d8d8d8" stroke-width=".6"/><rect x="12" y="12" width="3" height="3" fill="#d8d8d8" stroke="#d8d8d8" stroke-width=".6"/></svg>
<div class="t" style="left:83px;top:399.5px;color:#f0f0f0;letter-spacing:-0.170px;">Border</div>
<svg style="left:51px;top:420.5px;" width="16" height="16" viewBox="0 0 16 16"><path d="M7 11.5 h-4 a2.5 2.5 0 0 1 -2.5 -2.5 v-5 a2.5 2.5 0 0 1 2.5 -2.5 h9 a2.5 2.5 0 0 1 2.5 2.5 v4" fill="none" stroke="#d8d8d8" stroke-width="1.2"/><path d="M9 6.5 v8 l2 -1.8 1.3 2.8 1.3 -0.6 -1.3 -2.8 h2.7z" fill="#d8d8d8"/></svg>
<div class="t" style="left:83px;top:420.5px;color:#f0f0f0;letter-spacing:0.168px;">Button</div>
<svg style="left:51px;top:441.5px;" width="16" height="16" viewBox="0 0 16 16"><path d="M2.5 3.5 h11 v10 h-11z M2.5 6 h11 M5 1.5 v3 M11 1.5 v3 M8 1.5 v2" fill="none" stroke="#d8d8d8" stroke-width="1.2"/><text x="4.6" y="12.4" font-family="Liberation Sans" font-size="6" font-weight="700" fill="#d8d8d8">12</text></svg>
<div class="t" style="left:83px;top:441.5px;color:#f0f0f0;letter-spacing:-0.212px;">Calendar</div>
<svg style="left:51px;top:462.5px;" width="16" height="16" viewBox="0 0 16 16"><path d="M1.5 1.5 h13 v13 h-13z" fill="none" stroke="#d8d8d8" stroke-width="1.2"/><path d="M4.5 4.5 h3 v3 h-3z M7.5 9.5 h5 v3 h-5z" fill="none" stroke="#d8d8d8" stroke-width="1"/></svg>
<div class="t" style="left:83px;top:462.5px;color:#f0f0f0;letter-spacing:-0.498px;">Canvas</div>
<svg style="left:51px;top:483.5px;" width="16" height="16" viewBox="0 0 16 16"><path d="M1.5 1.5 h13 v13 h-13z" fill="none" stroke="#d8d8d8" stroke-width="1.2"/><path d="M4 8.5 l2.5 3 l5 -7" fill="none" stroke="#d8d8d8" stroke-width="1.5"/></svg>
<div class="t" style="left:83px;top:483.5px;color:#f0f0f0;letter-spacing:-0.336px;">CheckBox</div>
<svg style="left:51px;top:504.5px;" width="16" height="16" viewBox="0 0 16 16"><rect x="1.6" y="1.6" width="12.8" height="3.6" fill="#1f1f1f" stroke="#5cb8f0" stroke-width="1.3"/><rect x="10" y="1" width="5" height="4.8" fill="#5cb8f0"/><path d="M11 2.6 h3 l-1.5 1.8z" fill="#1f1f1f"/><path d="M2.5 6 v8.5 h11 v-8.5 M5 9 h6 M5 11.8 h4" fill="none" stroke="#d8d8d8" stroke-width="1.1"/></svg>
<div class="t" style="left:83px;top:504.5px;color:#f0f0f0;letter-spacing:-0.045px;">ComboBox</div>
<svg style="left:51px;top:525.5px;" width="16" height="16" viewBox="0 0 16 16"><path d="M4.5 4 v-2.5 h10 v13 h-4.5" fill="none" stroke="#d8d8d8" stroke-width="1.2"/><circle cx="5" cy="10.5" r="3.6" fill="none" stroke="#d8d8d8" stroke-width="1.2"/><circle cx="5" cy="10.5" r="1.3" fill="#d8d8d8"/><path d="M5 10.5 l3 -3" stroke="#d8d8d8"/></svg>
<div class="t" style="left:83px;top:525.5px;color:#f0f0f0;letter-spacing:0.142px;">ContentControl</div>
<svg style="left:51px;top:546.5px;" width="16" height="16" viewBox="0 0 16 16"><rect x="5" y="1" width="3" height="3" fill="#d8d8d8"/><rect x="9" y="1" width="3" height="3" fill="#d8d8d8"/><rect x="9" y="5" width="3" height="3" fill="#d8d8d8"/><rect x="9" y="9" width="3" height="3" fill="#d8d8d8"/><rect x="13" y="1" width="3" height="3" fill="#d8d8d8"/><rect x="13" y="5" width="3" height="3" fill="#d8d8d8"/><rect x="13" y="9" width="3" height="3" fill="#d8d8d8"/><path d="M0.6 7 v6.6 a3.6 1.6 0 0 0 7.2 0 v-6.6 a3.6 1.6 0 0 0 -7.2 0" fill="#5cb8f0" stroke="#1f1f1f" stroke-width=".8"/></svg>
<div class="t" style="left:83px;top:546.5px;color:#f0f0f0;letter-spacing:-0.277px;">DataGrid</div>
<svg style="left:51px;top:567.5px;" width="16" height="16" viewBox="0 0 16 16"><path d="M2.5 2.5 h11 v11 h-11z" fill="none" stroke="#d8d8d8" stroke-width="1.2"/><rect x="2.5" y="2.5" width="11" height="3" fill="#d8d8d8"/><rect x="4.5" y="7.2" width="1.6" height="1.6" fill="#d8d8d8"/><rect x="4.5" y="9.9" width="1.6" height="1.6" fill="#d8d8d8"/><rect x="7.2" y="7.2" width="1.6" height="1.6" fill="#d8d8d8"/><rect x="7.2" y="9.9" width="1.6" height="1.6" fill="#d8d8d8"/><rect x="9.9" y="7.2" width="1.6" height="1.6" fill="#d8d8d8"/><rect x="9.9" y="9.9" width="1.6" height="1.6" fill="#d8d8d8"/></svg>
<div class="t" style="left:83px;top:567.5px;color:#f0f0f0;letter-spacing:-0.229px;">DatePicker</div>
<svg style="left:51px;top:588.5px;" width="16" height="16" viewBox="0 0 16 16"><path d="M1.5 1.5 h13 v13 h-13z M1.5 5 h13 M5.5 5 v9.5" fill="none" stroke="#d8d8d8" stroke-width="1.1"/></svg>
<div class="t" style="left:83px;top:588.5px;color:#f0f0f0;letter-spacing:-0.181px;">DockPanel</div>
<svg style="left:51px;top:609.5px;" width="16" height="16" viewBox="0 0 16 16"><path d="M4.5 5 v-3.5 h7 l3 3 v10 h-5" fill="none" stroke="#d8d8d8" stroke-width="1.2"/><circle cx="5.5" cy="10.5" r="4" fill="none" stroke="#d8d8d8" stroke-width="1.2"/><path d="M5.5 8 v2.8 h2.5" fill="none" stroke="#d8d8d8" stroke-width="1.1"/></svg>
<div class="t" style="left:83px;top:609.5px;color:#f0f0f0;letter-spacing:-0.011px;">DocumentViewer</div>
<svg style="left:51px;top:630.5px;" width="16" height="16" viewBox="0 0 16 16"><ellipse cx="8" cy="8" rx="6.5" ry="4.2" fill="none" stroke="#d8d8d8" stroke-width="1.1"/></svg>
<div class="t" style="left:83px;top:630.5px;color:#f0f0f0;letter-spacing:-0.321px;">Ellipse</div>
<svg style="left:51px;top:651.5px;" width="16" height="16" viewBox="0 0 16 16"><circle cx="8" cy="8" r="6.3" fill="none" stroke="#d8d8d8" stroke-width="1.3"/><path d="M5.5 5.5 l2.5 2 2.5 -2 M5.5 8.5 l2.5 2 2.5 -2" fill="none" stroke="#d8d8d8" stroke-width="1.1"/></svg>
<div class="t" style="left:83px;top:651.5px;color:#f0f0f0;letter-spacing:-0.296px;">Expander</div>
<svg style="left:51px;top:672.5px;" width="16" height="16" viewBox="0 0 16 16"><path d="M1.5 14.5 v-9 h13 v9z M4.5 5 l3.5 -3.5 3.5 3.5" fill="none" stroke="#d8d8d8" stroke-width="1.1"/></svg>
<div class="t" style="left:83px;top:672.5px;color:#f0f0f0;letter-spacing:-0.314px;">Frame</div>
<svg style="left:51px;top:693.5px;" width="16" height="16" viewBox="0 0 16 16"><rect x="2.3" y="2.3" width="3" height="3" fill="#d8d8d8"/><rect x="2.3" y="6.5" width="3" height="3" fill="#d8d8d8"/><rect x="2.3" y="10.7" width="3" height="3" fill="#d8d8d8"/><rect x="6.5" y="2.3" width="3" height="3" fill="#d8d8d8"/><rect x="6.5" y="6.5" width="3" height="3" fill="#d8d8d8"/><rect x="6.5" y="10.7" width="3" height="3" fill="#d8d8d8"/><rect x="10.7" y="2.3" width="3" height="3" fill="#d8d8d8"/><rect x="10.7" y="6.5" width="3" height="3" fill="#d8d8d8"/><rect x="10.7" y="10.7" width="3" height="3" fill="#d8d8d8"/></svg>
<div class="t" style="left:83px;top:693.5px;color:#f0f0f0;letter-spacing:-0.167px;">Grid</div>
<svg style="left:51px;top:714.5px;" width="16" height="16" viewBox="0 0 16 16"><path d="M8 1 v14 M1 8 h5 M10 8 h5" fill="none" stroke="#d8d8d8" stroke-width="1.2"/><path d="M4 5 l-3.5 3 3.5 3z M12 5 l3.5 3 -3.5 3z" fill="#d8d8d8"/></svg>
<div class="t" style="left:83px;top:714.5px;color:#f0f0f0;letter-spacing:-0.068px;">GridSplitter</div>
<svg style="left:51px;top:735.5px;" width="16" height="16" viewBox="0 0 16 16"><path d="M3 3.5 h-1.5 v11 h13 v-11 h-1.5" fill="none" stroke="#d8d8d8" stroke-width="1.1"/><text x="4" y="6.5" font-family="Liberation Sans" font-size="6" font-weight="700" fill="#d8d8d8">XY</text></svg>
<div class="t" style="left:83px;top:735.5px;color:#f0f0f0;letter-spacing:-0.216px;">GroupBox</div>
<svg style="left:51px;top:756.5px;" width="16" height="16" viewBox="0 0 16 16"><rect x="1.5" y="2.5" width="13" height="11" fill="none" stroke="#d8d8d8" stroke-width="1.1"/><path d="M2 13 v-3 l3 -3 3 3 2 -1.5 4 3 v1.5z" fill="#5cb8f0"/><circle cx="11" cy="5.5" r="1.3" fill="#e8b04a"/></svg>
<div class="t" style="left:83px;top:756.5px;color:#f0f0f0;letter-spacing:-0.030px;">Image</div>
<svg style="left:51px;top:777.5px;" width="16" height="16" viewBox="0 0 16 16"><path d="M1.5 14.5 L6.6 1.5 h2.8 L14.5 14.5 h-2.7 l-1.1 -3.2 h-5.4 l-1.1 3.2z M6 9.2 h4 L8 3.6z" fill="#d8d8d8" fill-rule="evenodd"/></svg>
<div class="t" style="left:83px;top:777.5px;color:#f0f0f0;letter-spacing:-0.312px;">Label</div>
<svg style="left:51px;top:798.5px;" width="16" height="16" viewBox="0 0 16 16"><path d="M1.5 1.5 h13 v13 h-13z" fill="none" stroke="#d8d8d8" stroke-width="1.2"/><path d="M3.5 5 h5 M3.5 8 h5 M3.5 11 h5" fill="none" stroke="#d8d8d8" stroke-width="1.2"/><rect x="10" y="2" width="4.5" height="12" fill="#5cb8f0"/><path d="M11 6 l1.2 -1.8 1.2 1.8z M11 10 l1.2 1.8 1.2 -1.8z" fill="#1f1f1f"/></svg>
<div class="t" style="left:83px;top:798.5px;color:#f0f0f0;letter-spacing:-0.336px;">ListBox</div>
<svg style="left:51px;top:819.5px;" width="16" height="16" viewBox="0 0 16 16"><path d="M1.5 1.5 h13 v13 h-13z" fill="none" stroke="#d8d8d8" stroke-width="1.2"/><path d="M4 5 h8 M4 8 h8 M4 11 h6" fill="none" stroke="#d8d8d8" stroke-width="1.2"/></svg>
<div class="t" style="left:83px;top:819.5px;color:#f0f0f0;letter-spacing:-0.196px;">ListView</div>
<svg style="left:51px;top:840.5px;" width="16" height="16" viewBox="0 0 16 16"><path d="M1.5 2.5 h13 v11 h-13z M4 2.5 v11 M12 2.5 v11" fill="none" stroke="#d8d8d8" stroke-width="1.1"/><path d="M6.5 5.5 l4 2.5 -4 2.5z" fill="#d8d8d8"/></svg>
<div class="t" style="left:83px;top:840.5px;color:#f0f0f0;letter-spacing:-0.067px;">MediaElement</div>
<svg style="left:51px;top:861.5px;" width="16" height="16" viewBox="0 0 16 16"><path d="M1.5 1.5 h8 v3 h-8z M1.5 4.5 v10 h13 v-10 h-5 M4 8 h8 M4 11 h6" fill="none" stroke="#d8d8d8" stroke-width="1.1"/></svg>
<div class="t" style="left:83px;top:861.5px;color:#f0f0f0;letter-spacing:0.171px;">Menu</div>
<svg style="left:51px;top:882.5px;" width="16" height="16" viewBox="0 0 16 16"><path d="M1.5 3.5 h13 v9 h-13z" fill="none" stroke="#d8d8d8" stroke-width="1.1"/><text x="3.5" y="12" font-family="Liberation Sans" font-size="9" font-weight="700" fill="#d8d8d8">**</text></svg>
<div class="t" style="left:83px;top:882.5px;color:#f0f0f0;letter-spacing:-0.360px;">PasswordBox</div>
</div>
<div class="a" style="left:228px;top:73px;width:86px;height:19px;background:#2d2d2d;"></div>
<div class="t" style="left:232px;top:74.5px;color:#bdbdbd;letter-spacing:0.329px;">Output</div>
<div class="a" style="left:314px;top:72px;width:155px;height:21px;background:#3d3d3d;"></div>
<div class="a" style="left:314px;top:72px;width:155px;height:2px;background:#7160e8;"></div>
<div class="t" style="left:319px;top:74.5px;color:#ffffff;font-weight:700;letter-spacing:-0.070px;">MainWindow.xaml*</div>
<svg style="left:435px;top:79px;" width="10" height="8" viewBox="0 0 10 8"><path d="M0 4 h3.5 M3.5 1 v6 M3.5 2 h5 v3.6 h-5 M3.5 5 h5" fill="none" stroke="#e0e0e0" stroke-width="1.1"/></svg>
<svg style="left:454px;top:78px;" width="9" height="9" viewBox="0 0 9 9"><path d="M0.5 0.5 L8.5 8.5 M8.5 0.5 L0.5 8.5" stroke="#e8e8e8" stroke-width="1.4"/></svg>
<div class="a" style="left:470px;top:73px;width:161px;height:19px;background:#2d2d2d;"></div>
<div class="t" style="left:474px;top:74.0px;color:#bdbdbd;letter-spacing:0.109px;">MainWindow.xaml.cs</div>
<svg style="left:1391px;top:81px;" width="8" height="5" viewBox="0 0 8 5"><path d="M0 0 h8 l-4 4.5z" fill="#e0e0e0"/></svg>
<svg style="left:1408px;top:77px;" width="11" height="11" viewBox="0 0 11 11"><circle cx="5.5" cy="5.5" r="3" fill="none" stroke="#e0e0e0" stroke-width="2"/><path d="M5.5 0 v11 M0 5.5 h11 M1.6 1.6 l7.8 7.8 M9.4 1.6 l-7.8 7.8" stroke="#e0e0e0" stroke-width="1.5"/><circle cx="5.5" cy="5.5" r="1.4" fill="#1f1f1f"/></svg>
<div class="a" style="left:227px;top:92px;width:1194px;height:2px;background:#7160e8;"></div>
<div class="a" style="left:227px;top:94px;width:1194px;height:21px;background:#383838;"></div>
<div class="a" style="left:227px;top:114px;width:1194px;height:1px;background:#2a2a2a;"></div>
<div class="a" style="left:782px;top:94px;width:5px;height:21px;background:#2a2a2a;"></div>
<div class="a" style="left:1338px;top:95px;width:3px;height:19px;background:#2a2a2a;"></div>
<svg style="left:231px;top:99px;" width="15" height="10" viewBox="0 0 15 10"><rect x="0.6" y="0.6" width="13.8" height="8.8" fill="none" stroke="#e0e0e0" stroke-width="1.2"/><path d="M5.6 2.8 l-2.4 2.2 2.4 2.2 M9.4 2.8 l2.4 2.2 -2.4 2.2" fill="none" stroke="#e0e0e0" stroke-width="1.1"/></svg>
<div class="t" style="left:249px;top:96.5px;color:#f0f0f0;letter-spacing:-0.527px;">TextBox</div>
<svg style="left:773px;top:103px;" width="7" height="4" viewBox="0 0 7 4"><path d="M0 0 h7 l-3.5 4z" fill="#d0d0d0"/></svg>
<svg style="left:790px;top:97px;" width="14" height="14" viewBox="0 0 14 14"><path d="M13 3.6 a3.6 3.6 0 0 1 -5 3.3 L2.6 12.6 a1.2 1.2 0 0 1 -1.8 -1.8 L6.5 5.6 a3.6 3.6 0 0 1 4.6 -4.6 l-2.2 2.2 0.4 1.6 1.6 0.4z" fill="#e0e0e0"/></svg>
<div class="t" style="left:808px;top:96.5px;color:#f0f0f0;letter-spacing:-0.502px;">Text</div>
<svg style="left:1331px;top:103px;" width="7" height="4" viewBox="0 0 7 4"><path d="M0 0 h7 l-3.5 4z" fill="#d0d0d0"/></svg>
<svg style="left:1374px;top:97px;" width="12" height="15" viewBox="0 0 12 15"><path d="M0 6 h12 M0 9 h12 M6 0.5 v4 M6 14.5 v-4 M3.8 2.5 l2.2 -2.2 2.2 2.2 M3.8 12.5 l2.2 2.2 2.2 -2.2" fill="none" stroke="#e8e8e8" stroke-width="1.2"/></svg>
<div class="a" style="left:227px;top:115px;width:24px;height:568px;background:#333333;"></div>
<div class="a" style="left:251px;top:115px;width:1089px;height:568px;background:#1e1e1e;"></div>
<div class="a" style="left:251px;top:115px;width:73px;height:568px"><div class="t mono" style="-webkit-text-stroke:0;right:0;top:0.80px;height:24.5px;line-height:24.5px;font-size:18.27px;color:#9a9a9a">1</div><div class="t mono" style="-webkit-text-stroke:0;right:0;top:25.30px;height:24.5px;line-height:24.5px;font-size:18.27px;color:#9a9a9a">2</div><div class="t mono" style="-webkit-text-stroke:0;right:0;top:49.80px;height:24.5px;line-height:24.5px;font-size:18.27px;color:#9a9a9a">3</div><div class="t mono" style="-webkit-text-stroke:0;right:0;top:74.30px;height:24.5px;line-height:24.5px;font-size:18.27px;color:#9a9a9a">4</div><div class="t mono" style="-webkit-text-stroke:0;right:0;top:98.80px;height:24.5px;line-height:24.5px;font-size:18.27px;color:#9a9a9a">5</div><div class="t mono" style="-webkit-text-stroke:0;right:0;top:123.30px;height:24.5px;line-height:24.5px;font-size:18.27px;color:#9a9a9a">6</div><div class="t mono" style="-webkit-text-stroke:0;right:0;top:147.80px;height:24.5px;line-height:24.5px;font-size:18.27px;color:#9a9a9a">7</div><div class="t mono" style="-webkit-text-stroke:0;right:0;top:172.30px;height:24.5px;line-height:24.5px;font-size:18.27px;color:#9a9a9a">8</div><div class="t mono" style="-webkit-text-stroke:0;right:0;top:196.80px;height:24.5px;line-height:24.5px;font-size:18.27px;color:#9a9a9a">9</div><div class="t mono" style="-webkit-text-stroke:0;right:0;top:221.30px;height:24.5px;line-height:24.5px;font-size:18.27px;color:#9a9a9a">10</div><div class="t mono" style="-webkit-text-stroke:0;right:0;top:245.80px;height:24.5px;line-height:24.5px;font-size:18.27px;color:#9a9a9a">11</div><div class="t mono" style="-webkit-text-stroke:0;right:0;top:270.30px;height:24.5px;line-height:24.5px;font-size:18.27px;color:#ffffff">12</div><div class="t mono" style="-webkit-text-stroke:0;right:0;top:294.80px;height:24.5px;line-height:24.5px;font-size:18.27px;color:#9a9a9a">13</div><div class="t mono" style="-webkit-text-stroke:0;right:0;top:319.30px;height:24.5px;line-height:24.5px;font-size:18.27px;color:#9a9a9a">14</div><div class="t mono" style="-webkit-text-stroke:0;right:0;top:343.80px;height:24.5px;line-height:24.5px;font-size:18.27px;color:#9a9a9a">15</div><div class="t mono" style="-webkit-text-stroke:0;right:0;top:368.30px;height:24.5px;line-height:24.5px;font-size:18.27px;color:#9a9a9a">16</div><div class="t mono" style="-webkit-text-stroke:0;right:0;top:392.80px;height:24.5px;line-height:24.5px;font-size:18.27px;color:#9a9a9a">17</div><div class="t mono" style="-webkit-text-stroke:0;right:0;top:417.30px;height:24.5px;line-height:24.5px;font-size:18.27px;color:#9a9a9a">18</div><div class="t mono" style="-webkit-text-stroke:0;right:0;top:441.80px;height:24.5px;line-height:24.5px;font-size:18.27px;color:#9a9a9a">19</div><div class="t mono" style="-webkit-text-stroke:0;right:0;top:466.30px;height:24.5px;line-height:24.5px;font-size:18.27px;color:#9a9a9a">20</div><div class="t mono" style="-webkit-text-stroke:0;right:0;top:490.80px;height:24.5px;line-height:24.5px;font-size:18.27px;color:#9a9a9a">21</div></div>
<div class="a" style="left:327.5px;top:286px;width:7px;height:295px;background:#5bb55b;"></div>
<div class="a" style="left:327.5px;top:385px;width:7px;height:24px;background:#1e1e1e;border:1px solid #c9a227;"></div>
<div class="a" style="left:345px;top:135px;width:1px;height:470px;background:#a0a0a0;"></div>
<div class="a" style="left:345px;top:531px;width:7px;height:1px;background:#a0a0a0;"></div>
<div class="a" style="left:345px;top:604px;width:7px;height:1px;background:#a0a0a0;"></div>
<div class="a" style="left:338px;top:122px;width:13px;height:13px;background:#1e1e1e;border:1px solid #a8a8a8;"></div>
<div class="a" style="left:341px;top:128px;width:7px;height:1px;background:#e0e0e0;"></div>
<div class="a" style="left:338px;top:342px;width:13px;height:13px;background:#1e1e1e;border:1px solid #a8a8a8;"></div>
<div class="a" style="left:341px;top:348px;width:7px;height:1px;background:#e0e0e0;"></div>
<svg style="left:252px;top:389px;" width="16" height="16" viewBox="0 0 16 16"><path d="M9.5 0.8 C6.5 0.8 4.5 2 3.5 4 L0.2 6.3 L2.6 9.2 L4.6 7.6 L12.6 15 L14.8 12.8 L7 5.4 C6.6 3.4 7.6 2 9.5 0.8z" fill="#c8c8c8"/></svg>
<div class="a" style="left:351px;top:385px;width:989px;height:25px;border:2px solid #464646;border-right:none;"></div>
<div class="a" style="left:352px;top:115px;width:988px;height:568px;overflow:hidden"><div class="t mono" style="left:-7.60px;top:0.80px;height:24.5px;line-height:24.5px;font-size:18.27px;letter-spacing:-0.019px"><span style="color:#569cd6;">ng.MainWindow&quot;</span></div><div class="t mono" style="left:-8.30px;top:25.30px;height:24.5px;line-height:24.5px;font-size:18.27px;letter-spacing:-0.019px"><span style="color:#569cd6;text-decoration:underline;text-underline-offset:1.5px;text-decoration-thickness:1.3px;">.microsoft.com/winfx/2006/xaml/presentation</span><span style="color:#569cd6;">&quot;</span></div><div class="t mono" style="left:-7.60px;top:49.80px;height:24.5px;line-height:24.5px;font-size:18.27px;letter-spacing:-0.019px"><span style="color:#569cd6;text-decoration:underline;text-underline-offset:1.5px;text-decoration-thickness:1.3px;">as.microsoft.com/winfx/2006/xaml</span><span style="color:#569cd6;">&quot;</span></div><div class="t mono" style="left:-7.60px;top:74.30px;height:24.5px;line-height:24.5px;font-size:18.27px;letter-spacing:-0.019px"><span style="color:#569cd6;text-decoration:underline;text-underline-offset:1.5px;text-decoration-thickness:1.3px;">as.microsoft.com/expression/blend/2008</span><span style="color:#569cd6;">&quot;</span></div><div class="t mono" style="left:-7.60px;top:98.80px;height:24.5px;line-height:24.5px;font-size:18.27px;letter-spacing:-0.019px"><span style="color:#569cd6;text-decoration:underline;text-underline-offset:1.5px;text-decoration-thickness:1.3px;">mas.openxmlformats.org/markup-compatibility/2006</span><span style="color:#569cd6;">&quot;</span></div><div class="t mono" style="left:-7.60px;top:123.30px;height:24.5px;line-height:24.5px;font-size:18.27px;letter-spacing:-0.019px"><span style="color:#3f6d9e;">space:S08DataBinding&quot;</span></div><div class="t mono" style="left:-7.60px;top:172.30px;height:24.5px;line-height:24.5px;font-size:18.27px;letter-spacing:-0.019px"><span style="color:#9cdcfe;">ight</span><span style="color:#808080;">=</span><span style="color:#569cd6;">&quot;450&quot;</span><span style="color:#9cdcfe;"> Width</span><span style="color:#808080;">=</span><span style="color:#569cd6;">&quot;800&quot;</span><span style="color:#808080;">&gt;</span></div><div class="t mono" style="left:-7.60px;top:319.30px;height:24.5px;line-height:24.5px;font-size:18.27px;letter-spacing:-0.019px"><span style="color:#9cdcfe;">ame</span><span style="color:#808080;">=</span><span style="color:#569cd6;">&quot;ElMeuSlider&quot;</span><span style="color:#9cdcfe;"> Minimum</span><span style="color:#808080;">=</span><span style="color:#569cd6;">&quot;0&quot;</span><span style="color:#9cdcfe;"> Maximum</span><span style="color:#808080;">=</span><span style="color:#569cd6;">&quot;100&quot;</span><span style="color:#808080;">&gt;&lt;/</span><span style="color:#f0f0f0;-webkit-text-stroke:0.55px currentColor;">Slider</span><span style="color:#808080;">&gt;</span></div><div class="t mono" style="left:-7.60px;top:270.30px;height:24.5px;line-height:24.5px;font-size:18.27px;letter-spacing:-0.019px"><span style="color:#9cdcfe;">Name</span><span style="color:#808080;">=</span><span style="color:#569cd6;">&quot;ElMeuQuadre&quot;</span><span style="color:#9cdcfe;"> Margin</span><span style="color:#808080;">=</span><span style="color:#569cd6;">&quot;</span></div><div class="a" style="left:289px;top:272.5px;width:57px;height:19px;background:#2a2a33;border-radius:2px"></div><div class="t mono" style="left:292px;top:271.0px;height:24.5px;line-height:24.5px;font-size:14.45px;letter-spacing:0.001px;color:#9a916e">[all:]</div><div class="t mono" style="left:348px;top:270.30px;height:24.5px;line-height:24.5px;font-size:18.27px;letter-spacing:-0.019px"><span style="color:#569cd6;">160&quot;</span><span style="color:#9cdcfe;"> Text</span><span style="color:#808080;">=</span><span style="color:#569cd6;">&quot;</span><span style="color:#808080;">{</span><span style="color:#d8a88c;">Binding</span></div><div class="a" style="left:557px;top:272.5px;width:144px;height:19px;background:#2a2a33;border-radius:2px"></div><div class="t mono" style="left:568.4px;top:271.0px;height:24.5px;line-height:24.5px;font-size:14.45px;letter-spacing:0.001px;color:#9a916e">DataContext=???</div><div class="a" style="left:976.5px;top:270.5px;width:12px;height:23px;background:#0f4a8c"></div><div class="t mono" style="left:714.5px;top:270.30px;height:24.5px;line-height:24.5px;font-size:18.27px;letter-spacing:-0.019px"><span style="color:#e8c87a;">ElementName</span><span style="color:#808080;">=</span><span style="color:#808080;">}</span><span style="color:#569cd6;">&quot;</span><span style="color:#808080;">&gt;&lt;/</span><span style="color:#f0f0f0;-webkit-text-stroke:0.55px currentColor;">TextBox</span><span style="color:#808080;">&gt;</span></div><svg style="left:112px;top:290.0px" width="68" height="5"><path d="M0 2.5 q2 -4.4 4 0 q2 4.4 4 0 q2 -4.4 4 0 q2 4.4 4 0 q2 -4.4 4 0 q2 4.4 4 0 q2 -4.4 4 0 q2 4.4 4 0 q2 -4.4 4 0 q2 4.4 4 0 q2 -4.4 4 0 q2 4.4 4 0 q2 -4.4 4 0 q2 4.4 4 0 q2 -4.4 4 0 q2 4.4 4 0 q2 -4.4 4 0" fill="none" stroke="#10e010" stroke-width="1.4"/></svg><svg style="left:847px;top:290.0px" width="10" height="4"><path d="M0 2 q2 -3 4 0 q2 3 4 0" fill="none" stroke="#ff3030" stroke-width="1.3"/></svg><div class="a" style="left:845.5px;top:271.5px;width:1.5px;height:21px;background:#f0f0f0"></div></div>
<div class="a" style="left:1341px;top:115px;width:79px;height:19px;background:#333333;"></div>
<svg style="left:1375px;top:119px;" width="11" height="11" viewBox="0 0 11 11"><circle cx="5.5" cy="5.5" r="5.5" fill="#e51400"/><rect x="2.5" y="4.4" width="6" height="2.2" fill="#fff"/></svg>
<div class="a" style="left:1341px;top:134px;width:79px;height:549px;background:#3e3e42;"></div>
<svg style="left:1375px;top:138px;" width="10" height="6" viewBox="0 0 10 6"><path d="M0 6 l5 -5.5 5 5.5z" fill="#c8c8c8"/></svg>
<svg style="left:1375px;top:672px;" width="10" height="6" viewBox="0 0 10 6"><path d="M0 0 l5 5.5 5 -5.5z" fill="#c8c8c8"/></svg>
<div class="a" style="left:1342px;top:148px;width:78px;height:276px;background:#000000;border:1px solid #5a5a5a;"></div>
<div class="a" style="left:1342px;top:228px;width:5px;height:147px;background:#5bb55b;"></div>
<div class="a" style="left:1342px;top:275px;width:5px;height:16px;background:transparent;border:1px solid #a08a20;"></div>
<div class="a" style="left:1342px;top:282px;width:78px;height:2px;background:#f0f0f0;"></div>
<div class="a" style="left:1410px;top:282px;width:10px;height:2px;background:#e02020;"></div>
<div class="a" style="left:1410px;top:211px;width:10px;height:2px;background:#c08020;"></div>
<div class="a" style="left:1352px;top:153.0px;width:23px;height:1.5px;opacity:.7;background:repeating-linear-gradient(90deg,#9fc8f0 0 2px,transparent 2px 3px);"></div>
<div class="a" style="left:1356px;top:165.0px;width:35px;height:1.5px;opacity:.7;background:repeating-linear-gradient(90deg,#4f8fd0 0 2px,transparent 2px 3px);"></div>
<div class="a" style="left:1356px;top:176.0px;width:29px;height:1.5px;opacity:.7;background:repeating-linear-gradient(90deg,#4f8fd0 0 2px,transparent 2px 3px);"></div>
<div class="a" style="left:1356px;top:188.0px;width:33px;height:1.5px;opacity:.7;background:repeating-linear-gradient(90deg,#4f8fd0 0 2px,transparent 2px 3px);"></div>
<div class="a" style="left:1356px;top:200.0px;width:38px;height:1.5px;opacity:.7;background:repeating-linear-gradient(90deg,#4f8fd0 0 2px,transparent 2px 3px);"></div>
<div class="a" style="left:1356px;top:212.0px;width:23px;height:1.5px;opacity:.7;background:repeating-linear-gradient(90deg,#2f4f70 0 2px,transparent 2px 3px);"></div>
<div class="a" style="left:1356px;top:224.0px;width:9px;height:1.5px;opacity:.7;background:repeating-linear-gradient(90deg,#9fc8f0 0 2px,transparent 2px 3px);"></div>
<div class="a" style="left:1356px;top:235.0px;width:24px;height:1.5px;opacity:.7;background:repeating-linear-gradient(90deg,#6fa8e0 0 2px,transparent 2px 3px);"></div>
<div class="a" style="left:1355px;top:259.0px;width:6px;height:1.5px;opacity:.7;background:repeating-linear-gradient(90deg,#e0e0e0 0 2px,transparent 2px 3px);"></div>
<div class="a" style="left:1356px;top:282.5px;width:44px;height:1.5px;opacity:.7;background:repeating-linear-gradient(90deg,#c0c0c0 0 2px,transparent 2px 3px);"></div>
<div class="a" style="left:1357px;top:306.0px;width:40px;height:1.5px;opacity:.7;background:repeating-linear-gradient(90deg,#7fb8f0 0 2px,transparent 2px 3px);"></div>
<div class="a" style="left:1355px;top:341.0px;width:6px;height:1.5px;opacity:.7;background:repeating-linear-gradient(90deg,#e0e0e0 0 2px,transparent 2px 3px);"></div>
<div class="a" style="left:1353px;top:377.0px;width:4px;height:1.5px;opacity:.7;background:repeating-linear-gradient(90deg,#e0e0e0 0 2px,transparent 2px 3px);"></div>
<svg style="left:0px;top:0px;" width="1920" height="1080" viewBox="0 0 1920 1080"><path d="M813 291 L842.4 354.0" stroke="#fff" stroke-width="2"/><path d="M850.6 371.7 L837.5 356.3 L847.3 351.7z" fill="#fff"/><path d="M1101 297 L1119.8 365.2" stroke="#fff" stroke-width="2"/><path d="M1125 384 L1114.6 366.6 L1125.0 363.8z" fill="#fff"/><path d="M1307 580 L1297.9 485.4" stroke="#fff" stroke-width="2"/><path d="M1296 466 L1303.2 484.9 L1292.5 485.9z" fill="#fff"/></svg>
<div class="a" style="left:1198px;top:409px;width:179px;height:59px;background:#1f1f1f;border:1px solid #383838;box-shadow:0 1px 4px rgba(0,0,0,.5);"></div>
<div class="a" style="left:1228px;top:410px;width:147px;height:27px;background:#212121;border:1px solid #454545;"></div>
<svg style="left:1202.5px;top:416.3px;" width="20" height="15" viewBox="0 0 20 15"><rect x="0.7" y="0.7" width="18.6" height="13.2" fill="#303030" stroke="#a0a0a0" stroke-width="1.3"/><path d="M7.6 4.3 l-3.2 3 3.2 3 M12.4 4.3 l3.2 3 -3.2 3" fill="none" stroke="#f0f0f0" stroke-width="1.5"/></svg>
<svg style="left:1202.5px;top:445.3px;" width="20" height="15" viewBox="0 0 20 15"><rect x="0.7" y="0.7" width="18.6" height="13.2" fill="#303030" stroke="#a0a0a0" stroke-width="1.3"/><path d="M7.6 4.3 l-3.2 3 3.2 3 M12.4 4.3 l3.2 3 -3.2 3" fill="none" stroke="#f0f0f0" stroke-width="1.5"/></svg>
<div class="t" style="left:1231px;top:415.0px;font-size:17px;line-height:22px;height:22px;color:#f0f0f0;letter-spacing:-0.127px;">ElMeuQuadre</div>
<div class="t" style="left:1231px;top:444.0px;font-size:17px;line-height:22px;height:22px;color:#f0f0f0;letter-spacing:0.031px;">ElMeuSlider</div>
<div class="a" style="left:227px;top:683px;width:1194px;height:15px;background:#2d2d2d;"></div>
<div class="a" style="left:227px;top:698px;width:1194px;height:1px;background:#3a3a3a;"></div>
<div class="t" style="left:229.5px;top:683.0px;color:#e8e8e8;letter-spacing:-0.905px;">144 %</div>
<svg style="left:278px;top:690px;" width="6" height="4" viewBox="0 0 6 4"><path d="M0 0 h6 l-3 3.5z" fill="#d0d0d0"/></svg>
<div class="a" style="left:227px;top:683px;width:61px;height:15px;border:1px solid #3a3a3a;"></div>
<svg style="left:292px;top:687px;" width="6" height="9" viewBox="0 0 6 9"><path d="M6 0 v9 l-5.5 -4.5z" fill="#c8c8c8"/></svg>
<div class="a" style="left:475px;top:686.5px;width:518px;height:8px;background:#4d4d4d;"></div>
<svg style="left:1155px;top:687px;" width="6" height="9" viewBox="0 0 6 9"><path d="M0 0 v9 l5.5 -4.5z" fill="#c8c8c8"/></svg>
<div class="t" style="left:1188px;top:683.0px;color:#e8e8e8;letter-spacing:-0.561px;">Ln: 12</div>
<div class="t" style="left:1236.5px;top:683.0px;color:#e8e8e8;letter-spacing:-0.643px;">Ch: 89</div>
<div class="t" style="left:1286.5px;top:683.0px;color:#e8e8e8;letter-spacing:-0.524px;">Col: 104</div>
<div class="a" style="left:1336px;top:683px;width:38px;height:15px;background:#2d2d2d;border:1px solid #3d3d3d;"></div>
<div class="t" style="left:1346px;top:683.0px;color:#e8e8e8;letter-spacing:-1.891px;">SPC</div>
<div class="a" style="left:1374px;top:683px;width:46px;height:15px;background:#2d2d2d;border:1px solid #3d3d3d;"></div>
<div class="t" style="left:1385px;top:683.0px;color:#e8e8e8;letter-spacing:-1.584px;">CRLF</div>
<div class="a" style="left:227px;top:699px;width:1194px;height:22px;background:#2a2a2a;"></div>
<svg style="left:236px;top:699px;" width="80" height="19" viewBox="0 0 80 19"><path d="M0 0 h78 l-18 18.5 h-57 a3 3 0 0 1 -3 -3z" fill="#393939"/></svg>
<svg style="left:242px;top:703px;" width="9" height="9" viewBox="0 0 9 9"><rect x="0.5" y="0.5" width="8" height="8" fill="none" stroke="#e0e0e0"/><path d="M3.8 2.8 l-1.6 1.7 1.6 1.7 M5.2 2.8 l1.6 1.7 -1.6 1.7" fill="none" stroke="#e0e0e0" stroke-width=".8"/></svg>
<div class="t" style="left:255px;top:700.0px;color:#f0f0f0;letter-spacing:-0.169px;">XAML</div>
<svg style="left:315px;top:703px;" width="12" height="12" viewBox="0 0 12 12"><path d="M3 11 v-10 M0.5 3.5 l2.5 -2.5 2.5 2.5 M9 1 v10 M6.5 8.5 l2.5 2.5 2.5 -2.5" fill="none" stroke="#e8e8e8" stroke-width="1.3"/></svg>
<svg style="left:334px;top:701px;" width="74" height="20" viewBox="0 0 74 20"><path d="M17 0 h54 a3 3 0 0 1 3 3 v17 h-74z" fill="#313131"/></svg>
<svg style="left:352px;top:706px;" width="11" height="11" viewBox="0 0 11 11"><rect x="0.6" y="0.6" width="8.5" height="8.5" fill="none" stroke="#e0e0e0" stroke-width="1.2"/><rect x="2.5" y="2.5" width="4.5" height="4.5" fill="#e0e0e0"/><circle cx="8.5" cy="8.5" r="2.3" fill="#333" stroke="#e0e0e0"/></svg>
<div class="t" style="left:366px;top:704.0px;color:#f0f0f0;letter-spacing:-0.226px;">Design</div>
<svg style="left:415px;top:704px;" width="13" height="12" viewBox="0 0 13 12"><path d="M5 2.5 h-4.5 v9 h10 v-5" fill="none" stroke="#e0e0e0" stroke-width="1.2"/><path d="M6 6.5 l5.5 -5.5 M7.5 0.7 h4.3 v4.3" fill="none" stroke="#4aa3f5" stroke-width="1.5"/></svg>
<svg style="left:1375px;top:704px;" width="11" height="12" viewBox="0 0 11 12"><rect x="0.6" y="0.6" width="9.8" height="10.8" fill="none" stroke="#e8e8e8" stroke-width="1.2"/><path d="M5.5 2.5 v7" stroke="#e8e8e8" stroke-width="1.2"/></svg>
<div class="a" style="left:1388px;top:702px;width:15px;height:16px;background:transparent;border:1px solid #5a5a5a;"></div>
<svg style="left:1390px;top:704px;" width="11" height="12" viewBox="0 0 11 12"><rect x="0.6" y="0.6" width="9.8" height="10.8" fill="none" stroke="#e8e8e8" stroke-width="1.2"/><path d="M2.5 6 h6" stroke="#e8e8e8" stroke-width="1.2"/></svg>
<svg style="left:1405px;top:704px;" width="11" height="12" viewBox="0 0 11 12"><rect x="0.6" y="0.6" width="9.8" height="10.8" fill="none" stroke="#e8e8e8" stroke-width="1.2"/><path d="M3 3 l2.5 2.5 2.5 -2.5 M3 6 l2.5 2.5 2.5 -2.5" fill="none" stroke="#e8e8e8" stroke-width="1.1"/></svg>
<div class="a" style="left:227px;top:721px;width:1176px;height:270px;background:#1b1b1b;"></div>
<div class="a" style="left:1403px;top:721px;width:18px;height:270px;background:#2e2e2e;"></div>
<svg style="left:1407px;top:725px;" width="9" height="6" viewBox="0 0 9 6"><path d="M0 5.5 l4.5 -5 4.5 5z" fill="#c8c8c8"/></svg>
<svg style="left:1407px;top:981px;" width="9" height="6" viewBox="0 0 9 6"><path d="M0 0 l4.5 5 4.5 -5z" fill="#c8c8c8"/></svg>
<div class="a" style="left:1407px;top:746px;width:9px;height:104px;background:#4d4d4d;"></div>
<div class="a" style="left:374px;top:758px;width:884px;height:233px;background:#000;"></div>
<div class="a" style="left:375px;top:759px;width:882px;height:16px;background:#454545;"></div>
<div class="t" style="left:391px;top:760.0px;font-size:13px;color:#f0f0f0;letter-spacing:0.358px;">MainWindow</div>
<div class="a" style="left:1212px;top:761px;width:13px;height:12px;background:#222222;"></div>
<div class="a" style="left:1227px;top:761px;width:13px;height:12px;background:#222222;"></div>
<div class="a" style="left:1242px;top:761px;width:13px;height:12px;background:#222222;"></div>
<div class="a" style="left:375px;top:775px;width:882px;height:216px;background:#ffffff;"></div>
<div class="a" style="left:375px;top:775px;width:882px;height:2px;background:linear-gradient(#777,#fff);"></div>
<div class="a" style="left:761px;top:952px;width:110px;height:20px;background:#fff;border:1.5px solid #6f93d8;"></div>
<div class="a" style="left:754.5px;top:946.5px;width:5px;height:5px;background:#fff;border:1px solid #6f93d8;"></div>
<div class="a" style="left:754.5px;top:958.5px;width:5px;height:5px;background:#fff;border:1px solid #6f93d8;"></div>
<div class="a" style="left:754.5px;top:970.5px;width:5px;height:5px;background:#fff;border:1px solid #6f93d8;"></div>
<div class="a" style="left:813.0px;top:946.5px;width:5px;height:5px;background:#fff;border:1px solid #6f93d8;"></div>
<div class="a" style="left:813.0px;top:970.5px;width:5px;height:5px;background:#fff;border:1px solid #6f93d8;"></div>
<div class="a" style="left:870.5px;top:946.5px;width:5px;height:5px;background:#fff;border:1px solid #6f93d8;"></div>
<div class="a" style="left:870.5px;top:958.5px;width:5px;height:5px;background:#fff;border:1px solid #6f93d8;"></div>
<div class="a" style="left:870.5px;top:970.5px;width:5px;height:5px;background:#fff;border:1px solid #6f93d8;"></div>
<div class="a" style="left:812.5px;top:958.5px;width:5px;height:5px;background:#fff;border:1px solid #6f93d8;border-radius:50%;"></div>
<div class="a" style="left:838px;top:919px;width:32px;height:22px;background:#ececec;border:1px solid #b0b0b0;"></div>
<svg style="left:843px;top:922px;" width="14" height="16" viewBox="0 0 14 16"><path d="M6 1 a4 4 0 0 1 2.5 7 v2 h-5 v-2 a4 4 0 0 1 2.5 -7z" fill="#f2c037"/><circle cx="9.5" cy="11" r="3.6" fill="#e02020"/><path d="M8 9.5 l3 3 M11 9.5 l-3 3" stroke="#fff" stroke-width="1"/></svg>
<svg style="left:861px;top:926px;" width="5" height="8" viewBox="0 0 5 8"><path d="M0 0 l4.5 4 -4.5 4z" fill="#222"/></svg>
<div class="a" style="left:227px;top:991px;width:1194px;height:20px;background:#2d2d2d;"></div>
<div class="a" style="left:289px;top:991px;width:162px;height:20px;background:#1f1f1f;"></div>
<div class="a" style="left:228px;top:992px;width:61px;height:18px;background:#2d2d2d;border:1px solid #3d3d3d;"></div>
<div class="t" style="left:233px;top:992.5px;color:#f0f0f0;letter-spacing:-0.268px;">110,2...</div>
<svg style="left:279px;top:999px;" width="6" height="4" viewBox="0 0 6 4"><path d="M0 0 h6 l-3 3.5z" fill="#e0e0e0"/></svg>
<svg style="left:296px;top:996px;" width="10" height="10" viewBox="0 0 10 10"><path d="M8.5 5 a3.5 3.5 0 1 1 -1.6 -3" fill="none" stroke="#e0e0e0" stroke-width="1.5"/><path d="M5.5 0 h3 v3z" fill="#e0e0e0"/></svg>
<div class="a" style="left:312px;top:992px;width:22px;height:18px;background:transparent;border:1px solid #7160e8;"></div>
<div class="t" style="left:316.5px;top:992px;font-family:'Liberation Serif',serif;font-style:italic;font-weight:400;font-size:14.5px;-webkit-text-stroke:.3px #f0f0f0;color:#f0f0f0">fx</div><svg style="left:339px;top:996px;" width="14" height="10" viewBox="0 0 14 10"><rect x="0" y="0" width="4" height="4" fill="#e0e0e0"/><rect x="0" y="5" width="4" height="4" fill="#e0e0e0"/><rect x="5" y="0" width="4" height="4" fill="#e0e0e0"/><rect x="5" y="5" width="4" height="4" fill="#e0e0e0"/><rect x="10" y="0" width="4" height="4" fill="#e0e0e0"/><rect x="10" y="5" width="4" height="4" fill="#e0e0e0"/></svg>
<svg style="left:362px;top:996px;" width="15" height="10" viewBox="0 0 15 10"><rect x="0" y="0" width="4" height="4" fill="#e0e0e0"/><rect x="11" y="0" width="4" height="4" fill="#e0e0e0"/><rect x="0" y="6" width="4" height="4" fill="#e0e0e0"/><rect x="11" y="6" width="4" height="4" fill="#e0e0e0"/><circle cx="7.5" cy="5" r="3" fill="none" stroke="#e0e0e0" stroke-width="1.3"/></svg>
<svg style="left:386px;top:995px;" width="13" height="12" viewBox="0 0 13 12"><rect x="0" y="0" width="13" height="12" fill="#c8c8c8"/><path d="M1 1 h2 v2 h-2z M3 3 h2 v2 h-2z M5 1 h1 v1 h-1z M1 5 h1 v1 h-1z M5 5 h2 v2 h-2z M7 7 h2 v2 h-2z M9 9 h2 v2 h-2z M11 7 h1 v1 h-1z M7 11 h1 v1 h-1z M9 5 h1 v1 h-1z M5 9 h1 v1 h-1z" fill="#303030"/></svg>
<div class="a" style="left:404px;top:992px;width:22px;height:18px;background:transparent;border:1px solid #7160e8;"></div>
<svg style="left:408px;top:994px;" width="15" height="14" viewBox="0 0 15 14"><path d="M7.5 0 v14 M0 7 h15" stroke="#e0e0e0" stroke-width="1.2"/><rect x="5.5" y="5" width="4" height="4" fill="#2d2d2d" stroke="#e0e0e0"/></svg>
<div class="a" style="left:427px;top:992px;width:22px;height:18px;background:transparent;border:1px solid #7160e8;"></div>
<svg style="left:432px;top:994px;" width="13" height="14" viewBox="0 0 13 14"><path d="M2.5 6 v-5.4 h5.5 l3 3 v6.5" fill="none" stroke="#e0e0e0" stroke-width="1.1"/><path d="M5 3 h3 v3 M8 3 l-3 3" fill="none" stroke="#e0e0e0" stroke-width="1"/><rect x="4.2" y="8.6" width="4" height="4" fill="#35b0f0"/><path d="M2.6 8.6 l-2 2 2 2 M10 8.6 l2 2 -2 2" fill="none" stroke="#e0e0e0" stroke-width="1"/></svg>
<svg style="left:455px;top:996px;" width="6" height="9" viewBox="0 0 6 9"><path d="M6 0 v9 l-5.5 -4.5z" fill="#c8c8c8"/></svg>
<div class="a" style="left:525px;top:996px;width:802px;height:9px;background:#4d4d4d;"></div>
<svg style="left:1391px;top:996px;" width="6" height="9" viewBox="0 0 6 9"><path d="M0 0 v9 l5.5 -4.5z" fill="#c8c8c8"/></svg>
<div class="a" style="left:226px;top:94px;width:1px;height:918px;background:#3d3d3d;"></div>
<div class="a" style="left:1420px;top:94px;width:1px;height:918px;background:#3d3d3d;"></div>
<div class="a" style="left:226px;top:1011px;width:1195px;height:1px;background:#3d3d3d;"></div>
<div class="a" style="left:1427px;top:72px;width:487px;height:919px;background:#1f1f1f;border:1px solid #3d3d3d;"></div>
<div class="t" style="left:1432px;top:75.5px;color:#d6d6d6;letter-spacing:-0.081px;">Solution Explorer</div>
<svg style="left:1864px;top:82px;" width="8" height="5" viewBox="0 0 8 5"><path d="M0 0 h8 l-4 4.5z" fill="#e0e0e0"/></svg>
<svg style="left:1881px;top:77px;" width="10" height="13" viewBox="0 0 10 13"><path d="M2.5 0.7 h5 M3.5 0.7 v6 M7 0.7 v6 M6 0.7 v6 M1 7 h8 M5 7 v5.5" fill="none" stroke="#e0e0e0" stroke-width="1.2"/></svg>
<svg style="left:1897px;top:78px;" width="10" height="10" viewBox="0 0 10 10"><path d="M0.5 0.5 L9.5 9.5 M9.5 0.5 L0.5 9.5" stroke="#e0e0e0" stroke-width="1.4"/></svg>
<svg style="left:1435.5px;top:101px;" width="14" height="14" viewBox="0 0 14 14"><circle cx="7" cy="7" r="6" fill="none" stroke="#444" stroke-width="1.2"/><path d="M10.5 7 h-7 M6.5 4 l-3 3 3 3" fill="none" stroke="#444" stroke-width="1.2"/></svg>
<svg style="left:1457.5px;top:101px;" width="14" height="14" viewBox="0 0 14 14"><circle cx="7" cy="7" r="6" fill="none" stroke="#444" stroke-width="1.2"/><path d="M3.5 7 h7 M7.5 4 l3 3 -3 3" fill="none" stroke="#444" stroke-width="1.2"/></svg>
<svg style="left:1480px;top:101px;" width="15" height="14" viewBox="0 0 15 14"><path d="M0.7 7.5 L7.5 1 l6.8 6.5 M2.5 6.5 v7 h3.5 v-4 h3 v4 h3.5 v-7" fill="none" stroke="#e0e0e0" stroke-width="1.3"/></svg>
<svg style="left:1500px;top:100px;" width="17" height="16" viewBox="0 0 17 16"><path d="M8.5 4 v-3.5 h8 v9 h-5 M10.5 3 h4 M10.5 5 h4 M10.5 7 h4" fill="none" stroke="#e0e0e0" stroke-width="1"/><path d="M7.5 7.5 L3.6 11 1.8 9.7 1 10.1 v3.8 l.8 .4 1.8 -1.3 3.9 3.5 2.4 -1.1 v-7.8z M2 13 v-2 l1 1z M7.4 13.7 l-2.6 -1.7 2.6 -1.7z" fill="#a97be8" fill-rule="evenodd"/></svg>
<div class="a" style="left:1523px;top:97px;width:1px;height:22px;background:#424242;"></div>
<svg style="left:1531px;top:99px;" width="16" height="17" viewBox="0 0 16 17"><circle cx="9" cy="10" r="5.3" fill="none" stroke="#e0e0e0" stroke-width="1.3"/><path d="M9 7 v3.3 h2.6" fill="none" stroke="#e0e0e0" stroke-width="1.2"/><path d="M0 0 h5 l-2.5 4z" fill="#4aa3f5"/></svg>
<svg style="left:1553px;top:107px;" width="7" height="4" viewBox="0 0 7 4"><path d="M0 0 h7 l-3.5 4z" fill="#e0e0e0"/></svg>
<svg style="left:1567px;top:102px;" width="14" height="12" viewBox="0 0 14 12"><path d="M2 3.5 h11 M10 0.8 l3 2.7 -3 2.7 M12 8.5 h-11 M4 5.8 l-3 2.7 3 2.7" fill="none" stroke="#e0e0e0" stroke-width="1.2"/></svg>
<svg style="left:1589px;top:100px;" width="15" height="15" viewBox="0 0 15 15"><path d="M3 3 v-2.5 h11.5 v11 h-2.5" fill="none" stroke="#e0e0e0" stroke-width="1.1"/><rect x="0.6" y="3.6" width="11" height="11" fill="#1f1f1f" stroke="#e0e0e0" stroke-width="1.2"/><path d="M3 9 h6" stroke="#e0e0e0" stroke-width="1.2"/></svg>
<svg style="left:1611px;top:101px;" width="15" height="14" viewBox="0 0 15 14"><rect x="4.5" y="0.6" width="9" height="9" rx="1" fill="none" stroke="#e0e0e0" stroke-width="1.1"/><rect x="0.6" y="4.5" width="9" height="9" rx="1" fill="#1f1f1f" stroke="#e0e0e0" stroke-width="1.1"/><path d="M9.6 4.5 h-5.1 v5.1" fill="none" stroke="#e0e0e0" stroke-width="1"/></svg>
<div class="a" style="left:1632px;top:97px;width:1px;height:22px;background:#424242;"></div>
<div class="a" style="left:1638px;top:97px;width:22px;height:22px;background:#2a2838;border:1px solid #7160e8;"></div>
<svg style="left:1642px;top:101px;" width="14" height="14" viewBox="0 0 14 14"><rect x="0.5" y="0.5" width="3" height="3" fill="none" stroke="#e0e0e0"/><rect x="5.5" y="5.5" width="3" height="3" fill="none" stroke="#e0e0e0"/><rect x="10.5" y="10.5" width="3" height="3" fill="none" stroke="#e0e0e0"/><path d="M2 4 v3 h3 M7 9 v3 h3" fill="none" stroke="#e0e0e0"/></svg>
<svg style="left:1663px;top:107px;" width="7" height="4" viewBox="0 0 7 4"><path d="M0 0 h7 l-3.5 4z" fill="#e0e0e0"/></svg>
<div class="a" style="left:1675px;top:97px;width:1px;height:22px;background:#424242;"></div>
<svg style="left:1683px;top:100px;" width="16" height="16" viewBox="0 0 16 16"><path d="M15 4 a4 4 0 0 1 -5.6 3.7 L3 14.2 a1.4 1.4 0 0 1 -2 -2 L7.4 5.6 a4 4 0 0 1 5.2 -5.2 l-2.5 2.5 0.5 1.8 1.8 0.5z" fill="none" stroke="#e0e0e0" stroke-width="1.2"/></svg>
<div class="a" style="left:1702px;top:96px;width:22px;height:24px;background:#2a2838;border:1px solid #7160e8;"></div>
<svg style="left:1706px;top:102px;" width="15" height="12" viewBox="0 0 15 12"><path d="M0.5 10.5 h11 v-3 h-8 z" fill="none" stroke="#e0e0e0" stroke-width="1.1"/><path d="M4 7.5 h5" stroke="#e0e0e0"/><path d="M11 3 l1 -2 M12.5 5 h2 M12 7 l1 1" stroke="#e8c46a" stroke-width="1"/></svg>
<div class="a" style="left:1428px;top:122px;width:485px;height:21px;background:#383838;"></div>
<div class="t" style="left:1433px;top:125.0px;color:#d6d6d6;letter-spacing:-0.218px;">Search Solution Explorer</div>
<svg style="left:1885px;top:126px;" width="13" height="13" viewBox="0 0 13 13"><circle cx="8.2" cy="4.8" r="3.3" fill="none" stroke="#e0e0e0" stroke-width="1.6"/><path d="M5.8 7.2 L1.2 11.8" stroke="#e0e0e0" stroke-width="2.2"/></svg>
<svg style="left:1903px;top:131px;" width="6" height="4" viewBox="0 0 6 4"><path d="M0 0 h6 l-3 3.5z" fill="#e0e0e0"/></svg>
<div class="a" style="left:1428px;top:164px;width:485px;height:19px;background:#383838;"></div>
<svg style="left:1442px;top:147px;" width="16" height="15" viewBox="0 0 16 15"><path d="M0.6 12 v-11.4 h13.8 v6 M0.6 3.6 h13.8" fill="none" stroke="#e0e0e0" stroke-width="1.1"/><path d="M13 6.5 L9 10 7.2 8.7 6.4 9.1 v4 l.8 .4 1.8 -1.3 4 3.5 2.4 -1.1 v-7.2z M7.4 12 v-2 l1.1 1z M12.9 12.8 l-2.7 -1.8 2.7 -1.8z" fill="#a97be8" fill-rule="evenodd"/></svg>
<div class="t" style="left:1463px;top:146.5px;color:#f0f0f0;letter-spacing:-0.076px;">Solution &#x27;S08DataBinding&#x27; (1 of 1 project)</div>
<svg style="left:1439px;top:171px;" width="7" height="7" viewBox="0 0 7 7"><path d="M7 0 v7 h-7z" fill="#e0e0e0"/></svg>
<svg style="left:1461px;top:167px;" width="14" height="13" viewBox="0 0 14 13"><rect x="0.6" y="0.6" width="12.8" height="11.8" fill="none" stroke="#e0e0e0" stroke-width="1.1"/><text x="2" y="9.6" font-family="Liberation Sans" font-size="8" font-weight="700" fill="#6fcf6f">C#</text></svg>
<div class="t" style="left:1481px;top:165.5px;color:#ffffff;font-weight:700;letter-spacing:-0.215px;">S08DataBinding</div>
<svg style="left:1456px;top:187.5px;" width="6" height="10" viewBox="0 0 6 10"><path d="M0.7 0.9 l4.6 4.1 -4.6 4.1z" fill="none" stroke="#e0e0e0" stroke-width="1"/></svg>
<svg style="left:1478px;top:186px;" width="16" height="12" viewBox="0 0 16 12"><rect x="0.6" y="4.6" width="4" height="4" fill="none" stroke="#e0e0e0" stroke-width="1.1"/><rect x="10.4" y="0.6" width="5" height="4" fill="none" stroke="#e0e0e0" stroke-width="1.1"/><rect x="8.4" y="7.4" width="5" height="4" fill="none" stroke="#e0e0e0" stroke-width="1.1"/><path d="M4.6 6.6 h3 v-4 h2.8 M7.6 6.6 v3 h.8" fill="none" stroke="#e0e0e0" stroke-width="1.1"/></svg>
<div class="t" style="left:1499px;top:184.5px;color:#f0f0f0;letter-spacing:-0.227px;">Dependencies</div>
<svg style="left:1456px;top:206.5px;" width="6" height="10" viewBox="0 0 6 10"><path d="M0.7 0.9 l4.6 4.1 -4.6 4.1z" fill="none" stroke="#e0e0e0" stroke-width="1"/></svg>
<svg style="left:1478px;top:204px;" width="15" height="16" viewBox="0 0 15 16"><path d="M2.5 9 v-8.4 h7 l3.5 3.5 v10 h-3" fill="none" stroke="#e0e0e0" stroke-width="1.1"/><path d="M2.6 10.5 l-2 2 2 2 M8.4 10.5 l2 2 -2 2" fill="none" stroke="#e0e0e0" stroke-width="1.1"/><rect x="4.2" y="11.2" width="2.6" height="2.6" fill="#4aa3f5"/></svg>
<div class="t" style="left:1499px;top:203.5px;color:#f0f0f0;letter-spacing:0.060px;">App.xaml</div>
<div class="t" style="left:1478px;top:222px;font-size:12px;font-weight:700;color:#6fcf6f;letter-spacing:-0.5px">C#</div><div class="t" style="left:1499px;top:222.5px;color:#f0f0f0;letter-spacing:-0.091px;">AssemblyInfo.cs</div>
<svg style="left:1456px;top:244.5px;" width="6" height="10" viewBox="0 0 6 10"><path d="M0.7 0.9 l4.6 4.1 -4.6 4.1z" fill="none" stroke="#e0e0e0" stroke-width="1"/></svg>
<svg style="left:1478px;top:242px;" width="15" height="16" viewBox="0 0 15 16"><path d="M2.5 9 v-8.4 h7 l3.5 3.5 v10 h-3" fill="none" stroke="#e0e0e0" stroke-width="1.1"/><path d="M2.6 10.5 l-2 2 2 2 M8.4 10.5 l2 2 -2 2" fill="none" stroke="#e0e0e0" stroke-width="1.1"/><rect x="4.2" y="11.2" width="2.6" height="2.6" fill="#4aa3f5"/></svg>
<div class="t" style="left:1499px;top:241.5px;color:#f0f0f0;letter-spacing:0.220px;">MainWindow.xaml</div>
<div class="a" style="left:1427px;top:990px;width:102px;height:21px;background:#1f1f1f;border:1px solid #3d3d3d;border-top:1px solid #1f1f1f;"></div>
<div class="t" style="left:1433px;top:992.0px;color:#ffffff;letter-spacing:-0.081px;">Solution Explorer</div>
<div class="t" style="left:1535.5px;top:992.0px;color:#bdbdbd;letter-spacing:-0.104px;">Diagnostic Tools</div>
<div class="a" style="left:0px;top:1017px;width:1920px;height:23px;background:#424242;"></div>
<svg style="left:3px;top:1021px;" width="16" height="16" viewBox="0 0 16 16"><path d="M0.6 0.6 h14.8 v10.8 h-8.4 l-3 3 v-3 h-3.4z" fill="none" stroke="#e8e8e8" stroke-width="1.1"/></svg>
<div class="t" style="left:28px;top:1020.5px;color:#ffffff;letter-spacing:-0.028px;">Attribute value is expected</div>
<svg style="left:1491px;top:1021px;" width="12" height="14" viewBox="0 0 12 14"><path d="M6 14 v-13 M1 6 l5 -5 5 5" fill="none" stroke="#e8e8e8" stroke-width="1.2"/></svg>
<div class="t" style="left:1512px;top:1020.5px;color:#ffffff;letter-spacing:-0.027px;">Add to Source Control</div>
<svg style="left:1637px;top:1026px;" width="8" height="5" viewBox="0 0 8 5"><path d="M0 5 l4 -4.5 4 4.5z" fill="#e8e8e8"/></svg>
<svg style="left:1667px;top:1022px;" width="14" height="13" viewBox="0 0 14 13"><path d="M0.6 0.6 h12.8 v3 h-12.8z M1.6 3.6 v9 h10.8 v-9 M5 6 v3 h4 v-3" fill="none" stroke="#e8e8e8" stroke-width="1.1"/></svg>
<div class="t" style="left:1688px;top:1020.5px;color:#ffffff;letter-spacing:-0.267px;">Select Repository</div>
<svg style="left:1784px;top:1026px;" width="8" height="5" viewBox="0 0 8 5"><path d="M0 5 l4 -4.5 4 4.5z" fill="#e8e8e8"/></svg>
<svg style="left:1813px;top:1020px;" width="14" height="15" viewBox="0 0 14 15"><path d="M1 11 c2 -1.5 1.5 -4 2 -6 a3.6 3.6 0 0 1 7 0 c0.5 2 0 4.5 2 6z M5 12.5 a1.6 1.6 0 0 0 3.2 0" fill="none" stroke="#e8e8e8" stroke-width="1.1"/></svg>
<div class="a" style="left:1822px;top:1027px;width:11px;height:11px;background:#f4a6b8;border-radius:50%;"></div>
<div class="t" style="left:1824.5px;top:1027.0px;font-size:10px;line-height:11px;height:11px;color:#000;">2</div>
<svg style="left:1855px;top:1021px;" width="14" height="15" viewBox="0 0 14 15"><path d="M7 1 l3 0 -2 7 -3 0z" fill="#f2c037"/><path d="M2 8 l2 -1.5 v6 l6 .5 1.5 -4.5 h-3" fill="none" stroke="#e8e8e8" stroke-width="1.1"/></svg>
<svg style="left:1878px;top:1022px;" width="15" height="14" viewBox="0 0 15 14"><path d="M0 0 h15 l-7.5 14z" fill="#3fb950"/><path d="M4.5 3.5 l3 5.5 3 -5.5" fill="none" stroke="#fff" stroke-width="1.6"/></svg>
<svg style="left:1899px;top:1020px;" width="18" height="18" viewBox="0 0 18 18"><circle cx="9" cy="9" r="8" fill="none" stroke="#e8e8e8" stroke-width="1.2"/></svg>
<div class="a" style="left:0px;top:1040px;width:1920px;height:40px;background:#1c1c1c;"></div>
<svg style="left:16px;top:1052px;" width="17" height="17" viewBox="0 0 17 17"><path d="M0 2.3 L7 1.3 V8 H0z M0 9 H7 V15.7 L0 14.7z M8 1.2 L16.5 0 V8 H8z M8 9 H16.5 V17 L8 15.8z" fill="#fff"/></svg>
<div class="a" style="left:49px;top:1041px;width:287px;height:39px;background:#333333;border:1px solid #4a4a4a;border-bottom:none;"></div>
<svg style="left:59px;top:1051px;" width="20" height="19" viewBox="0 0 20 19"><circle cx="11.5" cy="7" r="5.6" fill="none" stroke="#e8e8e8" stroke-width="1.4"/><path d="M7.5 11 L1 18" stroke="#e8e8e8" stroke-width="1.5"/></svg>
<div class="t" style="left:88px;top:1051.0px;font-size:14.5px;line-height:20px;height:20px;color:#e8e8e8;letter-spacing:-0.038px;">Escriu aquí per cercar</div>
<svg style="left:257px;top:1043px;" width="79" height="37" viewBox="0 0 79 37"><path d="M0 37 L12 25 H68 L78 37z" fill="#deb887"/><path d="M12 14 l13 -4 3 16 -13 5z" fill="#4aa55a"/><path d="M25 10 l13 2 -3 17 -7 -3z" fill="#4aa55a"/><path d="M13 12 l12 -4 3 16 -12 4z" fill="#f6f6f6"/><path d="M25 8 l12 2 -3 16 -6 -2z" fill="#ffffff"/><path d="M16 14 l8 -2.6 M16.8 17 l8 -2.6 M17.6 20 l8 -2.6 M28 12 l7 1.2 M28 15 l6.5 1.2 M28.5 18 l6 1.2" stroke="#c8c8c8" stroke-width=".8"/><path d="M33 14 l9 -10 3 2 -9 10z" fill="#f0a030"/><path d="M42 4 l2 -2.4 3 2 -2 2.4z" fill="#e05050"/><path d="M33 14 l-0.8 3 3.4 -1z" fill="#f6d8a8"/><path d="M52 8 a5 5 0 0 1 10 0" fill="none" stroke="#2b6fe0" stroke-width="2"/><rect x="48" y="8" width="21" height="26" rx="8" fill="#2b7bf0"/><rect x="50" y="22" width="17" height="11" rx="4" fill="#1d5fd0"/><path d="M50 32 h17" stroke="#c070e0" stroke-width="1.5"/></svg>
<svg style="left:351px;top:1051px;" width="18" height="17" viewBox="0 0 18 17"><rect x="2.5" y="4.5" width="9" height="8" fill="none" stroke="#e8e8e8" stroke-width="1.3"/><path d="M1 1 h12 M1 16 h12 M15 4 v3 M15 9.5 v3.5 M14 1 h3 M14 16 h3" fill="none" stroke="#e8e8e8" stroke-width="1.3"/></svg>
<div class="a" style="left:399px;top:1048px;width:24px;height:24px;background:#f37623;border-radius:4px;"></div>
<svg style="left:402px;top:1053px;" width="18" height="14" viewBox="0 0 18 14"><path d="M2 3 a3 3 0 0 1 5 -1 l2 2 2 -2 a3 3 0 0 1 5 1 v1 a3 3 0 0 1 -2 3 a3 3 0 0 1 2 3 v1 a3 3 0 0 1 -5 1 l-2 -2 -2 2 a3 3 0 0 1 -5 -1 v-1 a3 3 0 0 1 2 -3 a3 3 0 0 1 -2 -3z M6 5 v4 h6 v-4z" fill="#fff" fill-rule="evenodd"/></svg>
<svg style="left:448px;top:1050px;" width="23" height="20" viewBox="0 0 23 20"><path d="M1 2 h8 l2 2 h11 v15 h-21z" fill="#f5b93a"/><path d="M1 6 h21 v13 h-21z" fill="#ffd766"/><path d="M7 13 h9 v6 h-9z" fill="#3a8be0"/><path d="M9.5 15.5 h4 v3.5 h-4z" fill="#ffd766"/></svg>
<svg style="left:497px;top:1048px;" width="24" height="24" viewBox="0 0 24 24"><circle cx="12" cy="12" r="12" fill="#db4437"/><path d="M12 12 L1.6 18 A12 12 0 0 0 14 23.8 L19 13z" fill="#0f9d58"/><path d="M12 12 L14 23.8 A12 12 0 0 0 22.4 6 H12z" fill="#ffcd40"/><circle cx="12" cy="12" r="5.6" fill="#fff"/><circle cx="12" cy="12" r="4.4" fill="#4285f4"/></svg>
<svg style="left:546px;top:1048px;" width="24" height="24" viewBox="0 0 24 24"><circle cx="12" cy="12" r="12" fill="#db4437"/><path d="M12 12 L1.6 18 A12 12 0 0 0 14 23.8 L19 13z" fill="#0f9d58"/><path d="M12 12 L14 23.8 A12 12 0 0 0 22.4 6 H12z" fill="#ffcd40"/><circle cx="12" cy="12" r="5.6" fill="#fff"/><circle cx="12" cy="12" r="4.4" fill="#4285f4"/></svg>
<svg style="left:561px;top:1062px;" width="14" height="13" viewBox="0 0 14 13"><ellipse cx="7" cy="6.5" rx="7" ry="6" fill="#1a1a1a"/><ellipse cx="6" cy="8" rx="3.5" ry="3.5" fill="#e8c4a8"/></svg>
<div class="a" style="left:595px;top:1048px;width:24px;height:22px;background:#0c0c4a;border:1.5px solid #8ac7ff;"></div>
<div class="t" style="left:600px;top:1051.0px;font-size:13px;color:#8ac7ff;font-weight:700;letter-spacing:-0.951px;">Ps</div>
<div class="a" style="left:632px;top:1040px;width:48px;height:40px;background:#3a3a3a;"></div>
<svg style="left:644px;top:1048px;" width="24" height="24" viewBox="0 0 24 24"><path d="M17.5 1 L8 10.2 3.4 6.6 1.2 7.7 v8.6 l2.2 1.1 4.6 -3.6 9.5 9.2 5.3 -2.6 V3.6z" fill="#8a5fd0"/><path d="M17.5 1 l5.3 2.6 v16.8 l-5.3 2.6z" fill="#b58cf0"/><path d="M17.5 7.3 v9.4 l-6 -4.7z M3.4 14.6 v-5.2 l2.8 2.6z" fill="#3a3a3a"/></svg>
<div class="a" style="left:538px;top:1078px;width:40px;height:2px;background:#76b9ed;"></div>
<div class="a" style="left:587px;top:1078px;width:40px;height:2px;background:#76b9ed;"></div>
<div class="a" style="left:632px;top:1078px;width:48px;height:2px;background:#76b9ed;"></div>
<svg style="left:1483px;top:1046px;" width="28" height="28" viewBox="0 0 28 28"><path d="M6 16 a5 5 0 0 1 1 -9.5 a7 7 0 0 1 13 1 a4.5 4.5 0 0 1 0 8.5z" fill="#cfe0f5"/><path d="M10 17 l4 0 3 7 -4 0z" fill="#2b7bf0"/><circle cx="20" cy="6" r="5" fill="#e03030"/></svg>
<div class="t" style="left:1500.5px;top:1047.0px;font-size:9px;line-height:10px;height:10px;color:#fff;">1</div>
<div class="t" style="left:1516px;top:1050.0px;font-size:14.5px;line-height:20px;height:20px;color:#f0f0f0;letter-spacing:-0.850px;">23°C</div>
<div class="t" style="left:1554.5px;top:1050.0px;font-size:14.5px;line-height:20px;height:20px;color:#f0f0f0;letter-spacing:-0.634px;">Lluvia suave</div>
<svg style="left:1653px;top:1055px;" width="13" height="8" viewBox="0 0 13 8"><path d="M0.7 7.3 l5.8 -6 5.8 6" fill="none" stroke="#e8e8e8" stroke-width="1.3"/></svg>
<svg style="left:1675px;top:1054px;" width="17" height="12" viewBox="0 0 17 12"><rect x="5.5" y="2.5" width="10" height="7" fill="none" stroke="#e8e8e8" stroke-width="1.1"/><rect x="15.5" y="4.5" width="1.5" height="3" fill="#e8e8e8"/><rect x="7" y="4" width="5" height="4" fill="#e8e8e8"/><path d="M0 4 h2 M0 8 h2 M2 3 v6 h2 v-6z" fill="#e8e8e8" stroke="#e8e8e8" stroke-width=".8"/></svg>
<svg style="left:1698px;top:1054px;" width="18" height="11" viewBox="0 0 18 11"><path d="M4 11 a3.5 3.5 0 0 1 .5 -7 a5 5 0 0 1 9 1 a3 3 0 0 1 .5 6z" fill="#d8d8d8"/></svg>
<svg style="left:1726px;top:1053px;" width="14" height="14" viewBox="0 0 14 14"><path d="M1 13 a12 12 0 0 1 12 -12" fill="none" stroke="#777" stroke-width="1.3"/><path d="M4.5 13 a8.5 8.5 0 0 1 8.5 -8.5" fill="none" stroke="#e8e8e8" stroke-width="1.3"/><path d="M8 13 a5 5 0 0 1 5 -5" fill="none" stroke="#e8e8e8" stroke-width="1.3"/><circle cx="12" cy="12.5" r="1.4" fill="#e8e8e8"/></svg>
<svg style="left:1747px;top:1053px;" width="17" height="14" viewBox="0 0 17 14"><path d="M0.6 4.5 h3 l4 -3.6 v12.2 l-4 -3.6 h-3z" fill="none" stroke="#e8e8e8" stroke-width="1.1"/><path d="M10 4.5 a3.5 3.5 0 0 1 0 5 M12 2.5 a6.5 6.5 0 0 1 0 9 M14 0.8 a9 9 0 0 1 0 12.4" fill="none" stroke="#e8e8e8" stroke-width="1.1"/></svg>
<div class="t" style="left:1774px;top:1052.0px;color:#f0f0f0;letter-spacing:-0.703px;">CAT</div>
<div class="t" style="left:1822px;top:1043.0px;color:#f0f0f0;letter-spacing:-0.806px;">19:42</div>
<div class="t" style="left:1807px;top:1060.5px;color:#f0f0f0;letter-spacing:-0.356px;">17/10/2023</div>
<svg style="left:1879px;top:1052px;" width="16" height="15" viewBox="0 0 16 15"><path d="M0 0 h16 v12 h-4 v3 l-3 -3 h-9z" fill="#e8e8e8"/><path d="M3 3.5 h10 M3 6 h10 M3 8.5 h10" stroke="#1c1c1c" stroke-width="1"/></svg>
<div class="a" style="left:1887px;top:1063px;width:15px;height:15px;background:#1c1c1c;border:1px solid #e8e8e8;border-radius:50%;"></div>
<div class="t" style="left:1891.5px;top:1065.0px;font-size:10px;line-height:11px;height:11px;color:#fff;font-weight:700;">2</div>
</body></html>
